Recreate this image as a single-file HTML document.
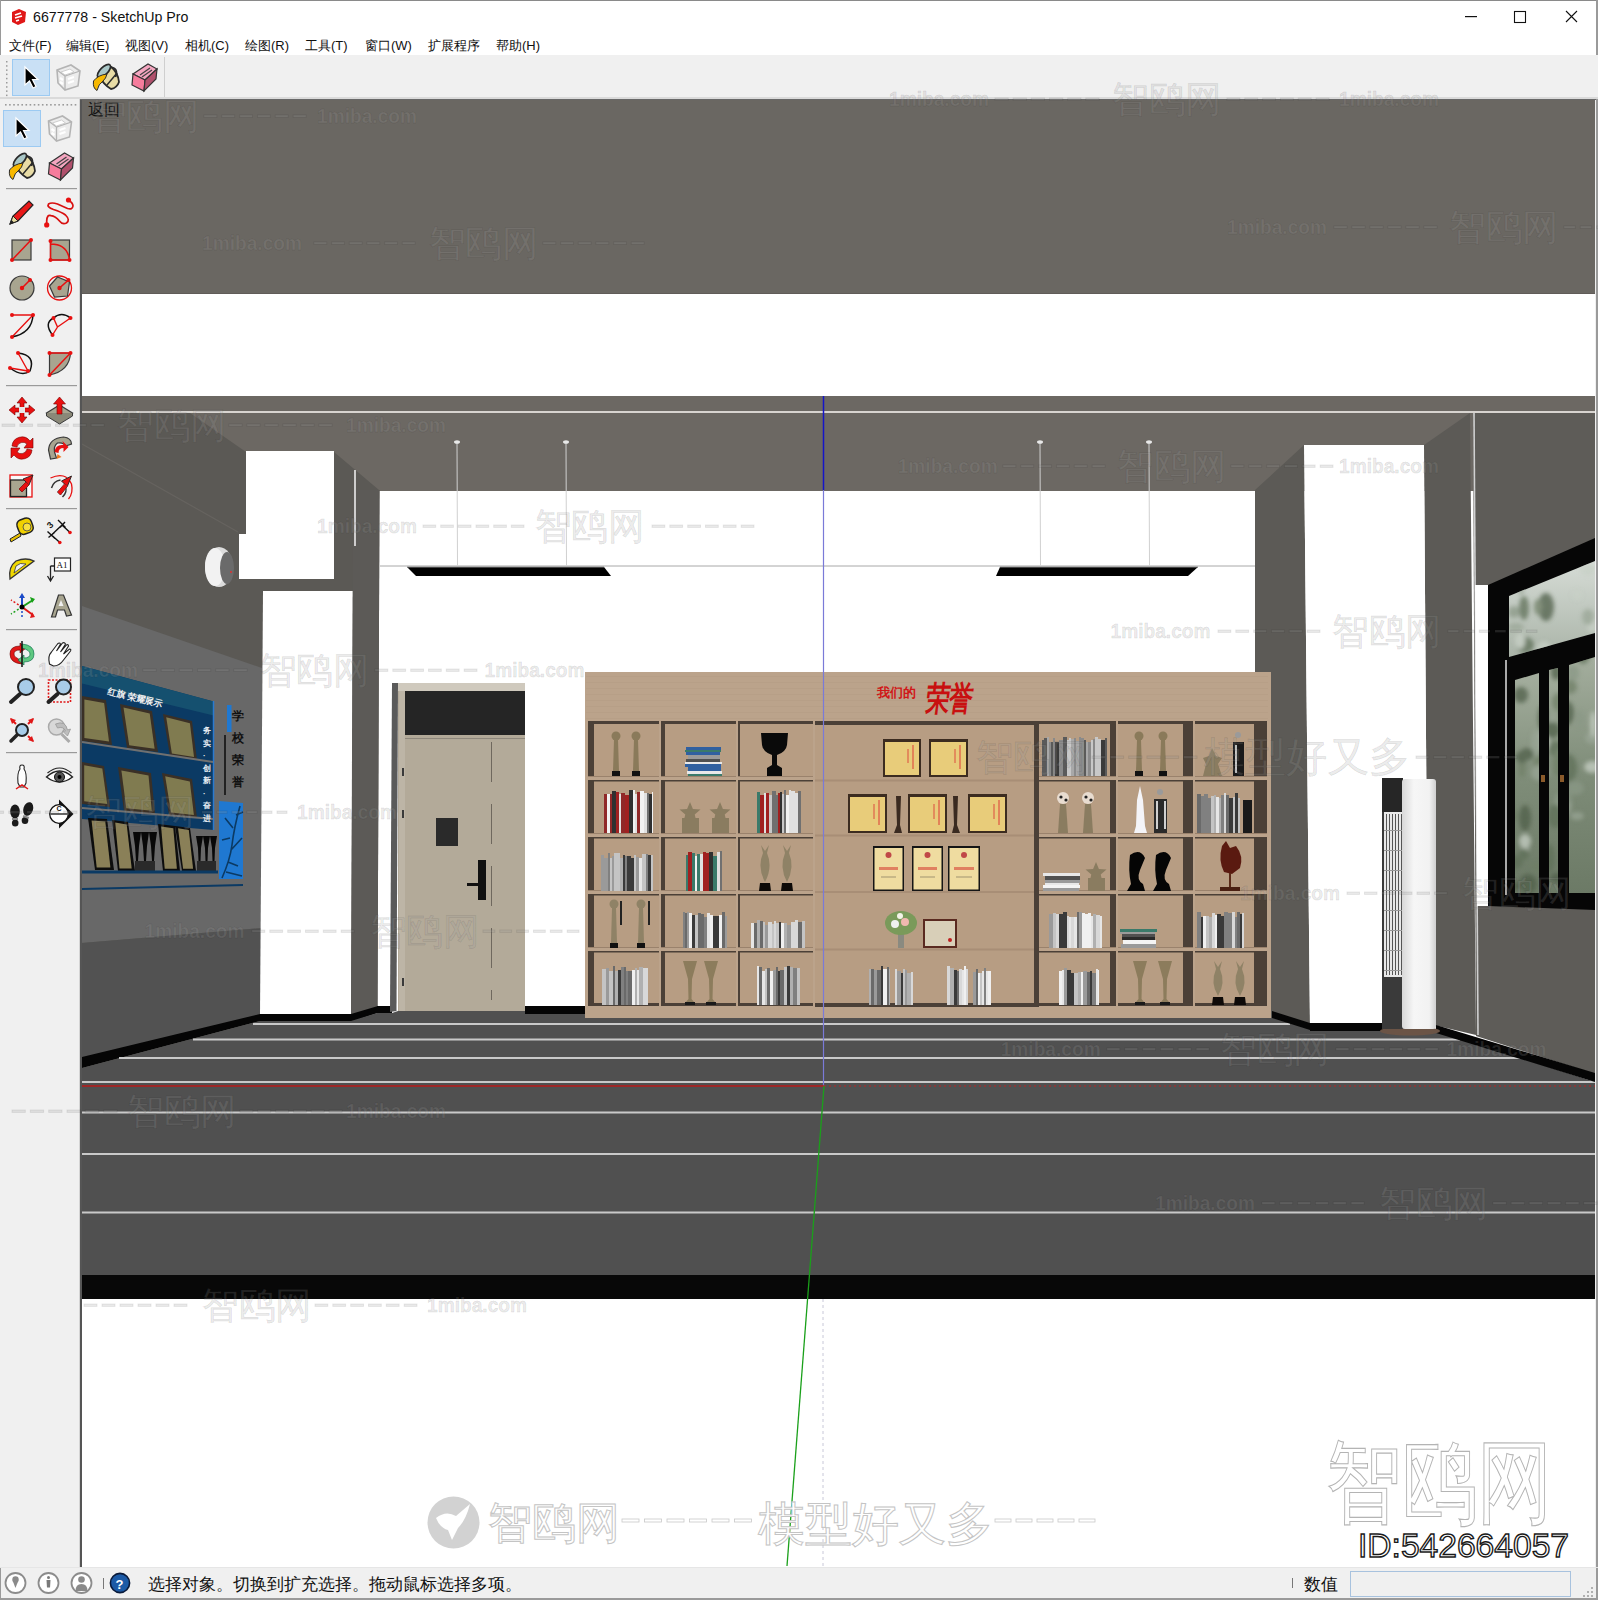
<!DOCTYPE html>
<html><head><meta charset="utf-8">
<style>
html,body{margin:0;padding:0;}
body{width:1598px;height:1600px;overflow:hidden;background:#f0f0f0;font-family:"Liberation Sans",sans-serif;position:relative;}
svg{position:absolute;left:0;top:0;}
</style></head>
<body>
<svg width="1598" height="1600" viewBox="0 0 1598 1600" font-family="Liberation Sans, sans-serif">
<defs>
<linearGradient id="glassUp" x1="0" y1="0" x2="0" y2="1"><stop offset="0" stop-color="#d6dcd6"/><stop offset="1" stop-color="#aab4a8"/></linearGradient>
<linearGradient id="glassLo" x1="0" y1="0" x2="0" y2="1"><stop offset="0" stop-color="#a4ae9e"/><stop offset="0.5" stop-color="#7e8c78"/><stop offset="1" stop-color="#6c7a66"/></linearGradient>
<linearGradient id="acw" x1="0" y1="0" x2="1" y2="0"><stop offset="0" stop-color="#d8d8d8"/><stop offset="0.35" stop-color="#f6f6f6"/><stop offset="0.8" stop-color="#f2f2f2"/><stop offset="1" stop-color="#cfcfcf"/></linearGradient>
<filter id="blur1"><feGaussianBlur stdDeviation="2"/></filter>
<clipPath id="glassclip"><polygon points="1509,596 1595,561 1595,633 1509,657"/><polygon points="1515,680 1539,673 1539,893 1515,893"/><polygon points="1549,670 1558,668 1558,893 1549,893"/><polygon points="1569,665 1595,657 1595,893 1569,893"/></clipPath>
</defs>
<rect x="0" y="0" width="1598" height="1600" fill="#f0f0f0"/>

<!-- VIEWPORT -->
<g id="vp">
<rect x="82" y="99" width="1513" height="1468" fill="#ffffff"/>
<!-- ceiling top -->
<rect x="82" y="99" width="1513" height="195" fill="#6a6762"/>
<rect x="82" y="293" width="1513" height="1" fill="#605c58"/>
<!-- lower ceiling band -->
<rect x="82" y="396" width="1513" height="95" fill="#6c6863"/>
<rect x="82" y="411" width="1513" height="2" fill="#d8d4d0"/>
<!-- left wall base dark -->
<polygon points="82,413 190,413 246,452 334,452 379,490 379.5,490 377.5,1010 82,1070" fill="#5b5955"/>
<!-- left wall lighter band -->
<polygon points="82,606 262,668 262,928 82,943" fill="#686868"/>
<!-- left wall lower -->
<polygon points="82,943 262,928 262,1016 82,1062" fill="#525252"/>
<!-- thin diagonal light line -->
<line x1="82" y1="444" x2="238" y2="532" stroke="#66635f" stroke-width="1.2"/>
<!-- white ceiling box -->
<polygon points="246,451 334,451 334,579 239,579 239,534 246,534" fill="#ffffff"/>
<!-- smoke detector -->
<ellipse cx="219" cy="567" rx="14" ry="20" fill="#dcdcdc"/>
<ellipse cx="215" cy="567" rx="10" ry="19" fill="#f2f2f2"/>
<ellipse cx="227" cy="568" rx="7" ry="16" fill="#6a6a6a"/>
<circle cx="231" cy="572" r="1" fill="#e03030"/>
<!-- left white pillar -->
<polygon points="263,591 353,591 351,1015 260,1015" fill="#ffffff"/>
<!-- back wall white region already white; pillar side dark -->
<polygon points="353,490 379.5,490 377.5,1008 351,1021" fill="#5c5a57"/>
<line x1="355" y1="470" x2="355" y2="546" stroke="#f4f4f4" stroke-width="1.5"/>
<!-- baseboards left -->
<polygon points="82,1057 260,1014 260,1021 82,1068" fill="#050505"/>
<polygon points="260,1014 351,1014 351,1021 260,1021" fill="#050505"/>
<polygon points="351,1014 378,1006 378,1013 351,1022" fill="#050505"/><rect x="377" y="1006" width="15" height="7" fill="#050505"/>
<!-- right side: pillar side dark regions -->
<polygon points="1255,490 1304,445 1310,1030 1272,1019 1255,1019" fill="#5c5a56"/>
<polygon points="1424,445 1470,413 1476,1035 1438,1026 1428,1024" fill="#5c5a56"/>
<!-- right wall -->
<polygon points="1473,413 1595,413 1595,1074 1476,1036" fill="#5e5c58"/>
<!-- right white pillar -->
<polygon points="1304,445 1424,445 1428,1024 1310,1024" fill="#ffffff"/>
<!-- back wall baseline (beam bottom) -->
<line x1="380" y1="566" x2="1255" y2="566" stroke="#a8a8a8" stroke-width="1"/>
<!-- floor -->
<polygon points="82,1068 260,1021 351,1021 377,1013 392,1013 398,1011 525,1011 583,1014 1272,1018 1310,1029 1384,1031 1438,1031 1595,1082 1595,1275 82,1275" fill="#505050"/>

<g id="floor">
<rect x="253" y="1023" width="1037" height="2" fill="#c9c9c9"/>
<rect x="193" y="1038.5" width="1267" height="2" fill="#c9c9c9"/>
<rect x="119" y="1057" width="1411" height="2" fill="#c9c9c9"/>
<rect x="82" y="1081" width="1513" height="2" fill="#c9c9c9"/>
<rect x="82" y="1111.5" width="1513" height="2" fill="#c9c9c9"/>
<rect x="82" y="1153" width="1513" height="2" fill="#c9c9c9"/>
<rect x="82" y="1211.5" width="1513" height="2" fill="#c9c9c9"/>
<rect x="82" y="1275" width="1513" height="24" fill="#080808"/>
</g>
<polygon points="1272,1011 1310,1023 1310,1030 1272,1018" fill="#050505"/>
<rect x="1310" y="1023" width="75" height="8" fill="#050505"/>
<polygon points="1436,1025 1595,1073 1595,1082 1436,1033" fill="#050505"/>
<rect x="380" y="1007" width="12" height="6" fill="#050505"/>
<rect x="525" y="1006" width="60" height="8" fill="#050505"/>
<line x1="457" y1="443" x2="457.5" y2="566" stroke="#d0d0d0" stroke-width="1"/>
<ellipse cx="457" cy="442" rx="3" ry="1.8" fill="#e8e8e8"/>
<line x1="566" y1="443" x2="566.5" y2="566" stroke="#d0d0d0" stroke-width="1"/>
<ellipse cx="566" cy="442" rx="3" ry="1.8" fill="#e8e8e8"/>
<line x1="1040" y1="443" x2="1040.5" y2="566" stroke="#d0d0d0" stroke-width="1"/>
<ellipse cx="1040" cy="442" rx="3" ry="1.8" fill="#e8e8e8"/>
<line x1="1149" y1="443" x2="1149.5" y2="566" stroke="#d0d0d0" stroke-width="1"/>
<ellipse cx="1149" cy="442" rx="3" ry="1.8" fill="#e8e8e8"/>
<polygon points="407,567 604,567 611,576 416,576" fill="#000"/>
<polygon points="1000,567 1198,567 1188,576 996,576" fill="#000"/>
<line x1="407" y1="567" x2="604" y2="567" stroke="#888" stroke-width="1"/>
<line x1="1000" y1="567" x2="1198" y2="567" stroke="#888" stroke-width="1"/>
<g id="door">
<polygon points="392,683 398,683 396.5,1011 390,1012" fill="#5a5a5a"/>
<rect x="398" y="683" width="127" height="8" fill="#cfc9bd"/>
<rect x="398" y="691" width="127" height="320" fill="#b3aa99"/>
<rect x="399" y="691" width="6" height="320" fill="#bdb5a6"/>
<rect x="405" y="691" width="120" height="44" fill="#252525"/>
<rect x="405" y="738" width="120" height="1" fill="#8f887c"/>
<rect x="436" y="818" width="22" height="28" fill="#2a2a2a"/>
<rect x="478" y="860" width="8" height="40" fill="#111"/>
<rect x="467" y="883" width="19" height="3" fill="#111"/>
<line x1="491.5" y1="742" x2="491.5" y2="1000" stroke="#6f685e" stroke-width="1" stroke-dasharray="40,22"/>
<rect x="402" y="768" width="2" height="8" fill="#3a3a3a"/>
<rect x="402" y="810" width="2" height="8" fill="#3a3a3a"/>
<rect x="402" y="978" width="2" height="8" fill="#3a3a3a"/>
</g>
<g id="shelf">
<rect x="585" y="672" width="686" height="346" fill="#bba38b"/>
<rect x="586" y="676" width="682" height="1" fill="#a88f78" opacity="0.2"/>
<rect x="586" y="682" width="682" height="1" fill="#a88f78" opacity="0.2"/>
<rect x="586" y="688" width="682" height="1" fill="#a88f78" opacity="0.2"/>
<rect x="586" y="694" width="682" height="1" fill="#a88f78" opacity="0.2"/>
<rect x="586" y="700" width="682" height="1" fill="#a88f78" opacity="0.2"/>
<rect x="586" y="706" width="682" height="1" fill="#a88f78" opacity="0.2"/>
<rect x="586" y="712" width="682" height="1" fill="#a88f78" opacity="0.2"/>
<rect x="586" y="718" width="682" height="1" fill="#a88f78" opacity="0.2"/>
<rect x="588" y="721" width="71" height="56" fill="#b79d83"/>
<rect x="588" y="721" width="6" height="56" fill="#4b4037"/>
<rect x="588" y="721" width="71" height="3" fill="#4b4037"/>
<rect x="588" y="776" width="71" height="1" fill="#9a826c"/>
<rect x="661" y="721" width="75" height="56" fill="#b79d83"/>
<rect x="661" y="721" width="4" height="56" fill="#4b4037"/>
<rect x="661" y="721" width="75" height="3" fill="#4b4037"/>
<rect x="661" y="776" width="75" height="1" fill="#9a826c"/>
<rect x="738" y="721" width="75" height="56" fill="#b79d83"/>
<rect x="738" y="721" width="2" height="56" fill="#4b4037"/>
<rect x="738" y="721" width="75" height="3" fill="#4b4037"/>
<rect x="738" y="776" width="75" height="1" fill="#9a826c"/>
<rect x="1039" y="721" width="77" height="56" fill="#b79d83"/>
<rect x="1110" y="721" width="6" height="56" fill="#4b4037"/>
<rect x="1039" y="721" width="77" height="3" fill="#4b4037"/>
<rect x="1039" y="776" width="77" height="1" fill="#9a826c"/>
<rect x="1118" y="721" width="75" height="56" fill="#b79d83"/>
<rect x="1183" y="721" width="10" height="56" fill="#4b4037"/>
<rect x="1118" y="721" width="75" height="3" fill="#4b4037"/>
<rect x="1118" y="776" width="75" height="1" fill="#9a826c"/>
<rect x="1195" y="721" width="72" height="56" fill="#b79d83"/>
<rect x="1254" y="721" width="13" height="56" fill="#4b4037"/>
<rect x="1195" y="721" width="72" height="3" fill="#4b4037"/>
<rect x="1195" y="776" width="72" height="1" fill="#9a826c"/>
<rect x="588" y="780" width="71" height="54" fill="#b79d83"/>
<rect x="588" y="780" width="6" height="54" fill="#4b4037"/>
<rect x="588" y="780" width="71" height="1.5" fill="#4b4037"/>
<rect x="588" y="833" width="71" height="1" fill="#9a826c"/>
<rect x="661" y="780" width="75" height="54" fill="#b79d83"/>
<rect x="661" y="780" width="4" height="54" fill="#4b4037"/>
<rect x="661" y="780" width="75" height="1.5" fill="#4b4037"/>
<rect x="661" y="833" width="75" height="1" fill="#9a826c"/>
<rect x="738" y="780" width="75" height="54" fill="#b79d83"/>
<rect x="738" y="780" width="2" height="54" fill="#4b4037"/>
<rect x="738" y="780" width="75" height="1.5" fill="#4b4037"/>
<rect x="738" y="833" width="75" height="1" fill="#9a826c"/>
<rect x="1039" y="780" width="77" height="54" fill="#b79d83"/>
<rect x="1110" y="780" width="6" height="54" fill="#4b4037"/>
<rect x="1039" y="780" width="77" height="1.5" fill="#4b4037"/>
<rect x="1039" y="833" width="77" height="1" fill="#9a826c"/>
<rect x="1118" y="780" width="75" height="54" fill="#b79d83"/>
<rect x="1183" y="780" width="10" height="54" fill="#4b4037"/>
<rect x="1118" y="780" width="75" height="1.5" fill="#4b4037"/>
<rect x="1118" y="833" width="75" height="1" fill="#9a826c"/>
<rect x="1195" y="780" width="72" height="54" fill="#b79d83"/>
<rect x="1254" y="780" width="13" height="54" fill="#4b4037"/>
<rect x="1195" y="780" width="72" height="1.5" fill="#4b4037"/>
<rect x="1195" y="833" width="72" height="1" fill="#9a826c"/>
<rect x="588" y="837" width="71" height="54" fill="#b79d83"/>
<rect x="588" y="837" width="6" height="54" fill="#4b4037"/>
<rect x="588" y="837" width="71" height="1.5" fill="#4b4037"/>
<rect x="588" y="890" width="71" height="1" fill="#9a826c"/>
<rect x="661" y="837" width="75" height="54" fill="#b79d83"/>
<rect x="661" y="837" width="4" height="54" fill="#4b4037"/>
<rect x="661" y="837" width="75" height="1.5" fill="#4b4037"/>
<rect x="661" y="890" width="75" height="1" fill="#9a826c"/>
<rect x="738" y="837" width="75" height="54" fill="#b79d83"/>
<rect x="738" y="837" width="2" height="54" fill="#4b4037"/>
<rect x="738" y="837" width="75" height="1.5" fill="#4b4037"/>
<rect x="738" y="890" width="75" height="1" fill="#9a826c"/>
<rect x="1039" y="837" width="77" height="54" fill="#b79d83"/>
<rect x="1110" y="837" width="6" height="54" fill="#4b4037"/>
<rect x="1039" y="837" width="77" height="1.5" fill="#4b4037"/>
<rect x="1039" y="890" width="77" height="1" fill="#9a826c"/>
<rect x="1118" y="837" width="75" height="54" fill="#b79d83"/>
<rect x="1183" y="837" width="10" height="54" fill="#4b4037"/>
<rect x="1118" y="837" width="75" height="1.5" fill="#4b4037"/>
<rect x="1118" y="890" width="75" height="1" fill="#9a826c"/>
<rect x="1195" y="837" width="72" height="54" fill="#b79d83"/>
<rect x="1254" y="837" width="13" height="54" fill="#4b4037"/>
<rect x="1195" y="837" width="72" height="1.5" fill="#4b4037"/>
<rect x="1195" y="890" width="72" height="1" fill="#9a826c"/>
<rect x="588" y="894" width="71" height="54" fill="#b79d83"/>
<rect x="588" y="894" width="6" height="54" fill="#4b4037"/>
<rect x="588" y="894" width="71" height="1.5" fill="#4b4037"/>
<rect x="588" y="947" width="71" height="1" fill="#9a826c"/>
<rect x="661" y="894" width="75" height="54" fill="#b79d83"/>
<rect x="661" y="894" width="4" height="54" fill="#4b4037"/>
<rect x="661" y="894" width="75" height="1.5" fill="#4b4037"/>
<rect x="661" y="947" width="75" height="1" fill="#9a826c"/>
<rect x="738" y="894" width="75" height="54" fill="#b79d83"/>
<rect x="738" y="894" width="2" height="54" fill="#4b4037"/>
<rect x="738" y="894" width="75" height="1.5" fill="#4b4037"/>
<rect x="738" y="947" width="75" height="1" fill="#9a826c"/>
<rect x="1039" y="894" width="77" height="54" fill="#b79d83"/>
<rect x="1110" y="894" width="6" height="54" fill="#4b4037"/>
<rect x="1039" y="894" width="77" height="1.5" fill="#4b4037"/>
<rect x="1039" y="947" width="77" height="1" fill="#9a826c"/>
<rect x="1118" y="894" width="75" height="54" fill="#b79d83"/>
<rect x="1183" y="894" width="10" height="54" fill="#4b4037"/>
<rect x="1118" y="894" width="75" height="1.5" fill="#4b4037"/>
<rect x="1118" y="947" width="75" height="1" fill="#9a826c"/>
<rect x="1195" y="894" width="72" height="54" fill="#b79d83"/>
<rect x="1254" y="894" width="13" height="54" fill="#4b4037"/>
<rect x="1195" y="894" width="72" height="1.5" fill="#4b4037"/>
<rect x="1195" y="947" width="72" height="1" fill="#9a826c"/>
<rect x="588" y="951" width="71" height="55" fill="#b79d83"/>
<rect x="588" y="951" width="6" height="55" fill="#4b4037"/>
<rect x="588" y="951" width="71" height="1.5" fill="#4b4037"/>
<rect x="588" y="1005" width="71" height="1" fill="#9a826c"/>
<rect x="661" y="951" width="75" height="55" fill="#b79d83"/>
<rect x="661" y="951" width="4" height="55" fill="#4b4037"/>
<rect x="661" y="951" width="75" height="1.5" fill="#4b4037"/>
<rect x="661" y="1005" width="75" height="1" fill="#9a826c"/>
<rect x="738" y="951" width="75" height="55" fill="#b79d83"/>
<rect x="738" y="951" width="2" height="55" fill="#4b4037"/>
<rect x="738" y="951" width="75" height="1.5" fill="#4b4037"/>
<rect x="738" y="1005" width="75" height="1" fill="#9a826c"/>
<rect x="1039" y="951" width="77" height="55" fill="#b79d83"/>
<rect x="1110" y="951" width="6" height="55" fill="#4b4037"/>
<rect x="1039" y="951" width="77" height="1.5" fill="#4b4037"/>
<rect x="1039" y="1005" width="77" height="1" fill="#9a826c"/>
<rect x="1118" y="951" width="75" height="55" fill="#b79d83"/>
<rect x="1183" y="951" width="10" height="55" fill="#4b4037"/>
<rect x="1118" y="951" width="75" height="1.5" fill="#4b4037"/>
<rect x="1118" y="1005" width="75" height="1" fill="#9a826c"/>
<rect x="1195" y="951" width="72" height="55" fill="#b79d83"/>
<rect x="1254" y="951" width="13" height="55" fill="#4b4037"/>
<rect x="1195" y="951" width="72" height="1.5" fill="#4b4037"/>
<rect x="1195" y="1005" width="72" height="1" fill="#9a826c"/>
<rect x="815" y="721" width="224" height="285" fill="#b79d83"/>
<rect x="815" y="721" width="224" height="4" fill="#4b4037"/>
<rect x="1034" y="721" width="5" height="286" fill="#4b4037"/>
<rect x="815" y="779.5" width="219" height="2" fill="#a88e76"/>
<rect x="815" y="834.5" width="219" height="2" fill="#a88e76"/>
<rect x="815" y="891" width="219" height="2" fill="#a88e76"/>
<rect x="815" y="948.5" width="219" height="2" fill="#a88e76"/>
<rect x="815" y="1003" width="224" height="4" fill="#4b4037"/>
<rect x="588" y="1003" width="71" height="3" fill="#4b4037"/>
<rect x="661" y="1003" width="75" height="3" fill="#4b4037"/>
<rect x="738" y="1003" width="75" height="3" fill="#4b4037"/>
<rect x="1039" y="1003" width="77" height="3" fill="#4b4037"/>
<rect x="1118" y="1003" width="75" height="3" fill="#4b4037"/>
<rect x="1195" y="1003" width="72" height="3" fill="#4b4037"/>
<text x="877" y="697" font-size="13" font-weight="bold" fill="#d01818">我们的</text>
<text x="0" y="0" font-size="27" font-weight="bold" fill="#c81010" font-family="Liberation Serif, serif" transform="translate(925 710) scale(0.88 1.25) skewX(-10)">荣誉</text>
<circle cx="616" cy="736" r="4.5" fill="#8a7a5a"/><path d="M614,740 L618,740 L619,771 L613,771 Z" fill="#8a7a5a"/><rect x="612" y="771" width="8" height="5" fill="#111"/>
<circle cx="636" cy="736" r="4.5" fill="#8a7a5a"/><path d="M634,740 L638,740 L639,771 L633,771 Z" fill="#8a7a5a"/><rect x="632" y="771" width="8" height="5" fill="#111"/>
<rect x="686" y="747" width="35" height="3" fill="#3060a0"/><rect x="685" y="750" width="36" height="2" fill="#3a7a6a"/><rect x="686" y="752" width="34" height="3" fill="#3060a0"/><rect x="688" y="755" width="32" height="4" fill="#9a9a9a"/><rect x="686" y="759" width="34" height="3" fill="#505050"/><rect x="685" y="762" width="37" height="2" fill="#e8e8e8"/><rect x="685" y="764" width="36" height="3" fill="#3060a0"/><rect x="688" y="767" width="33" height="4" fill="#3060a0"/><rect x="687" y="771" width="35" height="3" fill="#e8e8e8"/><rect x="688" y="774" width="34" height="2" fill="#3a7a6a"/>
<path d="M761,733 L788,733 L787,745 Q786,752 777,755 L777,765 L782,768 L782,776 L767,776 L767,768 L772,765 L772,755 Q763,752 762,745 Z" fill="#0a0a0a"/>
<rect x="604" y="794" width="3" height="39" fill="#902828"/><rect x="607" y="794" width="3" height="39" fill="#f2f2f2"/><rect x="610" y="794" width="2" height="39" fill="#902828"/><rect x="612" y="791" width="4" height="42" fill="#303030"/><rect x="616" y="792" width="3" height="41" fill="#a02020"/><rect x="619" y="794" width="2" height="39" fill="#e0e0e0"/><rect x="621" y="793" width="4" height="40" fill="#902828"/><rect x="625" y="795" width="4" height="38" fill="#a02020"/><rect x="629" y="790" width="4" height="43" fill="#303030"/><rect x="633" y="790" width="2" height="43" fill="#f2f2f2"/><rect x="635" y="794" width="2" height="39" fill="#e0e0e0"/><rect x="637" y="792" width="3" height="41" fill="#902828"/><rect x="640" y="791" width="4" height="42" fill="#f2f2f2"/><rect x="644" y="793" width="3" height="40" fill="#e0e0e0"/><rect x="647" y="793" width="2" height="40" fill="#707070"/><rect x="649" y="794" width="3" height="39" fill="#303030"/><rect x="652" y="792" width="1" height="41" fill="#f2f2f2"/>
<polygon points="690.0,802.0 692.9,809.0 700.5,809.6 694.7,814.5 696.5,821.9 690.0,818.0 683.5,821.9 685.3,814.5 679.5,809.6 687.1,809.0" fill="#8a7c60"/>
<rect x="682" y="818" width="17" height="15" fill="#8a7c60"/>
<polygon points="720.0,802.0 722.9,809.0 730.5,809.6 724.7,814.5 726.5,821.9 720.0,818.0 713.5,821.9 715.3,814.5 709.5,809.6 717.1,809.0" fill="#8a7c60"/>
<rect x="712" y="818" width="17" height="15" fill="#8a7c60"/>
<rect x="757" y="792" width="3" height="41" fill="#3a7a6a"/><rect x="760" y="795" width="4" height="38" fill="#a02020"/><rect x="764" y="793" width="2" height="40" fill="#e0e0e0"/><rect x="766" y="793" width="3" height="40" fill="#a02020"/><rect x="769" y="795" width="3" height="38" fill="#c8c8c8"/><rect x="772" y="791" width="4" height="42" fill="#707070"/><rect x="776" y="795" width="2" height="38" fill="#707070"/><rect x="778" y="793" width="2" height="40" fill="#a02020"/><rect x="780" y="792" width="2" height="41" fill="#303030"/><rect x="782" y="794" width="2" height="39" fill="#c8c8c8"/><rect x="784" y="790" width="2" height="43" fill="#707070"/><rect x="786" y="795" width="3" height="38" fill="#f2f2f2"/><rect x="789" y="790" width="2" height="43" fill="#e0e0e0"/><rect x="791" y="791" width="4" height="42" fill="#e0e0e0"/><rect x="795" y="793" width="3" height="40" fill="#e0e0e0"/><rect x="798" y="791" width="3" height="42" fill="#707070"/>
<rect x="601" y="855" width="3" height="36" fill="#9a9a9a"/><rect x="604" y="858" width="2" height="33" fill="#9a9a9a"/><rect x="606" y="858" width="2" height="33" fill="#9a9a9a"/><rect x="608" y="853" width="2" height="38" fill="#808080"/><rect x="610" y="858" width="2" height="33" fill="#c4c4c4"/><rect x="612" y="856" width="2" height="35" fill="#9a9a9a"/><rect x="614" y="853" width="4" height="38" fill="#c4c4c4"/><rect x="618" y="853" width="2" height="38" fill="#c4c4c4"/><rect x="620" y="858" width="3" height="33" fill="#b0b0b0"/><rect x="623" y="855" width="2" height="36" fill="#3a3a3a"/><rect x="625" y="856" width="2" height="35" fill="#808080"/><rect x="627" y="856" width="4" height="35" fill="#3a3a3a"/><rect x="631" y="858" width="3" height="33" fill="#3a3a3a"/><rect x="634" y="855" width="2" height="36" fill="#c4c4c4"/><rect x="636" y="857" width="3" height="34" fill="#9a9a9a"/><rect x="639" y="858" width="3" height="33" fill="#e6e6e6"/><rect x="642" y="854" width="4" height="37" fill="#c4c4c4"/><rect x="646" y="854" width="2" height="37" fill="#808080"/><rect x="648" y="855" width="3" height="36" fill="#3a3a3a"/><rect x="651" y="855" width="2" height="36" fill="#c4c4c4"/>
<rect x="686" y="855" width="2" height="36" fill="#3a7a6a"/><rect x="688" y="852" width="4" height="39" fill="#a02020"/><rect x="692" y="853" width="3" height="38" fill="#3a7a6a"/><rect x="695" y="856" width="2" height="35" fill="#f2f2f2"/><rect x="697" y="854" width="3" height="37" fill="#3a7a6a"/><rect x="700" y="854" width="3" height="37" fill="#e0e0e0"/><rect x="703" y="852" width="3" height="39" fill="#a02020"/><rect x="706" y="853" width="3" height="38" fill="#a02020"/><rect x="709" y="852" width="4" height="39" fill="#303030"/><rect x="713" y="856" width="4" height="35" fill="#3a7a6a"/><rect x="717" y="852" width="3" height="39" fill="#e0e0e0"/><rect x="720" y="851" width="2" height="40" fill="#707070"/>
<path d="M761,845 L765,851 L769,845 L767,853 Q773,867 765,882 Q757,867 763,853 Z" fill="#8f8266"/><path d="M759,891 L760,883 L770,883 L771,891 Z" fill="#0e0a08"/>
<path d="M783,845 L787,851 L791,845 L789,853 Q795,867 787,882 Q779,867 785,853 Z" fill="#8f8266"/><path d="M781,891 L782,883 L792,883 L793,891 Z" fill="#0e0a08"/>
<circle cx="614" cy="904" r="4.5" fill="#8f8266"/><path d="M612,908 L616,908 L617,943 L611,943 Z" fill="#8f8266"/><rect x="610" y="943" width="8" height="5" fill="#111"/>
<rect x="620" y="901" width="2" height="24" fill="#222"/>
<circle cx="641" cy="904" r="4.5" fill="#8f8266"/><path d="M639,908 L643,908 L644,943 L638,943 Z" fill="#8f8266"/><rect x="637" y="943" width="8" height="5" fill="#111"/>
<rect x="648" y="901" width="2" height="24" fill="#222"/>
<rect x="683" y="912" width="2" height="36" fill="#808080"/><rect x="685" y="913" width="2" height="35" fill="#6a6a6a"/><rect x="687" y="912" width="2" height="36" fill="#9a9a9a"/><rect x="689" y="913" width="3" height="35" fill="#f0f0f0"/><rect x="692" y="915" width="3" height="33" fill="#3a3a3a"/><rect x="695" y="915" width="3" height="33" fill="#c4c4c4"/><rect x="698" y="913" width="3" height="35" fill="#6a6a6a"/><rect x="701" y="914" width="3" height="34" fill="#6a6a6a"/><rect x="704" y="917" width="3" height="31" fill="#808080"/><rect x="707" y="913" width="3" height="35" fill="#e6e6e6"/><rect x="710" y="915" width="3" height="33" fill="#f0f0f0"/><rect x="713" y="916" width="3" height="32" fill="#3a3a3a"/><rect x="716" y="916" width="3" height="32" fill="#3a3a3a"/><rect x="719" y="915" width="3" height="33" fill="#f0f0f0"/><rect x="722" y="912" width="3" height="36" fill="#6a6a6a"/><rect x="725" y="916" width="2" height="32" fill="#9a9a9a"/>
<rect x="751" y="923" width="3" height="25" fill="#e6e6e6"/><rect x="754" y="923" width="3" height="25" fill="#6a6a6a"/><rect x="757" y="920" width="3" height="28" fill="#b0b0b0"/><rect x="760" y="921" width="3" height="27" fill="#6a6a6a"/><rect x="763" y="922" width="2" height="26" fill="#c4c4c4"/><rect x="765" y="925" width="3" height="23" fill="#9a9a9a"/><rect x="768" y="922" width="4" height="26" fill="#d8d8d8"/><rect x="772" y="924" width="2" height="24" fill="#c4c4c4"/><rect x="774" y="921" width="2" height="27" fill="#d8d8d8"/><rect x="776" y="923" width="3" height="25" fill="#c4c4c4"/><rect x="779" y="922" width="2" height="26" fill="#3a3a3a"/><rect x="781" y="923" width="3" height="25" fill="#f0f0f0"/><rect x="784" y="923" width="3" height="25" fill="#b0b0b0"/><rect x="787" y="925" width="4" height="23" fill="#9a9a9a"/><rect x="791" y="922" width="4" height="26" fill="#d8d8d8"/><rect x="795" y="920" width="3" height="28" fill="#d8d8d8"/><rect x="798" y="922" width="4" height="26" fill="#6a6a6a"/><rect x="802" y="921" width="3" height="27" fill="#c4c4c4"/>
<rect x="602" y="969" width="4" height="36" fill="#c4c4c4"/><rect x="606" y="968" width="3" height="37" fill="#9a9a9a"/><rect x="609" y="971" width="4" height="34" fill="#c4c4c4"/><rect x="613" y="966" width="2" height="39" fill="#6a6a6a"/><rect x="615" y="971" width="3" height="34" fill="#b0b0b0"/><rect x="618" y="970" width="3" height="35" fill="#3a3a3a"/><rect x="621" y="967" width="3" height="38" fill="#808080"/><rect x="624" y="967" width="2" height="38" fill="#6a6a6a"/><rect x="626" y="971" width="2" height="34" fill="#808080"/><rect x="628" y="971" width="4" height="34" fill="#6a6a6a"/><rect x="632" y="970" width="3" height="35" fill="#f0f0f0"/><rect x="635" y="968" width="2" height="37" fill="#b0b0b0"/><rect x="637" y="970" width="2" height="35" fill="#e6e6e6"/><rect x="639" y="967" width="4" height="38" fill="#b0b0b0"/><rect x="643" y="968" width="4" height="37" fill="#d8d8d8"/><rect x="647" y="968" width="1" height="37" fill="#d8d8d8"/>
<path d="M683,961 L697,961 L692,979 L691.5,999 L694,1002 L686,1002 L688.5,999 L688,979 Z" fill="#8c7c5c"/><rect x="685" y="1002" width="10" height="3" fill="#1a1a1a"/>
<path d="M704,961 L718,961 L713,979 L712.5,999 L715,1002 L707,1002 L709.5,999 L709,979 Z" fill="#8c7c5c"/><rect x="706" y="1002" width="10" height="3" fill="#1a1a1a"/>
<rect x="757" y="966" width="2" height="39" fill="#e6e6e6"/><rect x="759" y="967" width="3" height="38" fill="#6a6a6a"/><rect x="762" y="971" width="3" height="34" fill="#e6e6e6"/><rect x="765" y="969" width="2" height="36" fill="#c4c4c4"/><rect x="767" y="968" width="3" height="37" fill="#6a6a6a"/><rect x="770" y="971" width="3" height="34" fill="#f0f0f0"/><rect x="773" y="970" width="3" height="35" fill="#9a9a9a"/><rect x="776" y="967" width="2" height="38" fill="#6a6a6a"/><rect x="778" y="971" width="2" height="34" fill="#3a3a3a"/><rect x="780" y="970" width="4" height="35" fill="#6a6a6a"/><rect x="784" y="967" width="3" height="38" fill="#c4c4c4"/><rect x="787" y="966" width="3" height="39" fill="#3a3a3a"/><rect x="790" y="967" width="3" height="38" fill="#b0b0b0"/><rect x="793" y="968" width="4" height="37" fill="#808080"/><rect x="797" y="968" width="3" height="37" fill="#c4c4c4"/>
<rect x="883" y="739" width="38" height="38" fill="#3c2c20"/><rect x="885" y="742" width="34" height="33" fill="#e8cc7a"/><rect x="912" y="745" width="2" height="24" fill="#e07050" opacity="0.8"/><rect x="907" y="749" width="2" height="14" fill="#e07050" opacity="0.7"/>
<rect x="929" y="739" width="39" height="38" fill="#3c2c20"/><rect x="931" y="742" width="35" height="33" fill="#e8cc7a"/><rect x="959" y="745" width="2" height="24" fill="#e07050" opacity="0.8"/><rect x="954" y="749" width="2" height="14" fill="#e07050" opacity="0.7"/>
<rect x="848" y="794" width="39" height="39" fill="#3c2c20"/><rect x="850" y="797" width="35" height="34" fill="#e8cc7a"/><rect x="878" y="800" width="2" height="25" fill="#e07050" opacity="0.8"/><rect x="873" y="804" width="2" height="15" fill="#e07050" opacity="0.7"/>
<rect x="908" y="794" width="39" height="39" fill="#3c2c20"/><rect x="910" y="797" width="35" height="34" fill="#e8cc7a"/><rect x="938" y="800" width="2" height="25" fill="#e07050" opacity="0.8"/><rect x="933" y="804" width="2" height="15" fill="#e07050" opacity="0.7"/>
<rect x="968" y="794" width="39" height="39" fill="#3c2c20"/><rect x="970" y="797" width="35" height="34" fill="#e8cc7a"/><rect x="998" y="800" width="2" height="25" fill="#e07050" opacity="0.8"/><rect x="993" y="804" width="2" height="15" fill="#e07050" opacity="0.7"/>
<path d="M896,796 L901,796 L900,825 L902,833 L894,833 L897,825 Z" fill="#3a2a20"/>
<path d="M953,796 L958,796 L957,825 L960,833 L952,833 L954,825 Z" fill="#3a2a20"/>
<rect x="873" y="846" width="31" height="45" fill="#151515"/><rect x="874.5" y="848" width="28" height="41.5" fill="#efdca0"/><circle cx="888.5" cy="855" r="3" fill="#c04848"/><rect x="879" y="867" width="19" height="3" fill="#e08060"/><rect x="881" y="876" width="15" height="2" fill="#c8b888"/>
<rect x="912" y="846" width="31" height="45" fill="#151515"/><rect x="913.5" y="848" width="28" height="41.5" fill="#efdca0"/><circle cx="927.5" cy="855" r="3" fill="#c04848"/><rect x="918" y="867" width="19" height="3" fill="#e08060"/><rect x="920" y="876" width="15" height="2" fill="#c8b888"/>
<rect x="948" y="846" width="32" height="45" fill="#151515"/><rect x="949.5" y="848" width="29" height="41.5" fill="#efdca0"/><circle cx="964.0" cy="855" r="3" fill="#c04848"/><rect x="954" y="867" width="20" height="3" fill="#e08060"/><rect x="956" y="876" width="16" height="2" fill="#c8b888"/>
<rect x="898" y="930" width="6" height="18" fill="#8a8a80"/>
<ellipse cx="901" cy="923" rx="16" ry="12" fill="#7a9a5a"/>
<circle cx="895" cy="924" r="4" fill="#f0f0f0"/><circle cx="905" cy="922" r="4" fill="#f0b8b0"/><circle cx="900" cy="916" r="3" fill="#f4f4e8"/>
<rect x="923" y="919" width="34" height="29" fill="#5a2a20"/><rect x="925" y="921" width="30" height="25" fill="#d8cfb8"/><circle cx="950" cy="940" r="2" fill="#c02020"/>
<rect x="869" y="969" width="2" height="36" fill="#b0b0b0"/><rect x="871" y="969" width="3" height="36" fill="#6a6a6a"/><rect x="874" y="970" width="3" height="35" fill="#9a9a9a"/><rect x="877" y="970" width="4" height="35" fill="#6a6a6a"/><rect x="881" y="966" width="2" height="39" fill="#3a3a3a"/><rect x="883" y="969" width="4" height="36" fill="#f0f0f0"/><rect x="887" y="967" width="2" height="38" fill="#6a6a6a"/><rect x="889" y="969" width="1" height="36" fill="#b0b0b0"/>
<rect x="895" y="969" width="2" height="36" fill="#d8d8d8"/><rect x="897" y="971" width="4" height="34" fill="#9a9a9a"/><rect x="901" y="973" width="2" height="32" fill="#3a3a3a"/><rect x="903" y="969" width="2" height="36" fill="#c4c4c4"/><rect x="905" y="970" width="2" height="35" fill="#9a9a9a"/><rect x="907" y="973" width="4" height="32" fill="#b0b0b0"/><rect x="911" y="972" width="2" height="33" fill="#d8d8d8"/>
<rect x="947" y="966" width="3" height="39" fill="#d8d8d8"/><rect x="950" y="968" width="4" height="37" fill="#b0b0b0"/><rect x="954" y="970" width="3" height="35" fill="#3a3a3a"/><rect x="957" y="971" width="2" height="34" fill="#6a6a6a"/><rect x="959" y="969" width="3" height="36" fill="#d8d8d8"/><rect x="962" y="970" width="2" height="35" fill="#e6e6e6"/><rect x="964" y="966" width="2" height="39" fill="#f0f0f0"/><rect x="966" y="969" width="2" height="36" fill="#d8d8d8"/>
<rect x="973" y="972" width="3" height="33" fill="#9a9a9a"/><rect x="976" y="969" width="2" height="36" fill="#6a6a6a"/><rect x="978" y="973" width="2" height="32" fill="#f0f0f0"/><rect x="980" y="973" width="2" height="32" fill="#c4c4c4"/><rect x="982" y="971" width="2" height="34" fill="#e6e6e6"/><rect x="984" y="968" width="2" height="37" fill="#808080"/><rect x="986" y="971" width="2" height="34" fill="#e6e6e6"/><rect x="988" y="971" width="3" height="34" fill="#f0f0f0"/>
<rect x="1042" y="740" width="2" height="36" fill="#5a5a5a"/><rect x="1044" y="738" width="3" height="38" fill="#5a5a5a"/><rect x="1047" y="737" width="2" height="39" fill="#a8a8a8"/><rect x="1049" y="742" width="2" height="34" fill="#8a8a8a"/><rect x="1051" y="742" width="2" height="34" fill="#5a5a5a"/><rect x="1053" y="738" width="2" height="38" fill="#8a8a8a"/><rect x="1055" y="742" width="4" height="34" fill="#3a3a3a"/><rect x="1059" y="740" width="4" height="36" fill="#8a8a8a"/><rect x="1063" y="737" width="4" height="39" fill="#5a5a5a"/><rect x="1067" y="740" width="2" height="36" fill="#c8c8c8"/><rect x="1069" y="738" width="2" height="38" fill="#c8c8c8"/><rect x="1071" y="739" width="3" height="37" fill="#a8a8a8"/><rect x="1074" y="738" width="2" height="38" fill="#8a8a8a"/><rect x="1076" y="741" width="3" height="35" fill="#a8a8a8"/><rect x="1079" y="737" width="2" height="39" fill="#8a8a8a"/><rect x="1081" y="738" width="3" height="38" fill="#8a8a8a"/><rect x="1084" y="740" width="2" height="36" fill="#5a5a5a"/><rect x="1086" y="742" width="2" height="34" fill="#a8a8a8"/><rect x="1088" y="742" width="3" height="34" fill="#8a8a8a"/><rect x="1091" y="740" width="2" height="36" fill="#c8c8c8"/><rect x="1093" y="739" width="2" height="37" fill="#8a8a8a"/><rect x="1095" y="737" width="3" height="39" fill="#c8c8c8"/><rect x="1098" y="739" width="3" height="37" fill="#c8c8c8"/><rect x="1101" y="740" width="4" height="36" fill="#3a3a3a"/><rect x="1105" y="738" width="2" height="38" fill="#5a5a5a"/>
<circle cx="1139" cy="736" r="4.5" fill="#8a7a5a"/><path d="M1137,740 L1141,740 L1142,771 L1136,771 Z" fill="#8a7a5a"/><rect x="1135" y="771" width="8" height="5" fill="#111"/>
<circle cx="1163" cy="736" r="4.5" fill="#8a7a5a"/><path d="M1161,740 L1165,740 L1166,771 L1160,771 Z" fill="#8a7a5a"/><rect x="1159" y="771" width="8" height="5" fill="#111"/>
<polygon points="1212,748 1216,756 1222,758 1218,764 1222,776 1203,776 1206,764 1203,758 1209,756" fill="#8a7c60"/>
<rect x="1233" y="742" width="11" height="34" fill="#1a1a1a"/><rect x="1235" y="745" width="2" height="28" fill="#c8c8c8"/><circle cx="1238" cy="735" r="3" fill="#9a9a9a"/>
<circle cx="1063" cy="798" r="6" fill="#e8dcd0"/><circle cx="1061" cy="797" r="1.6" fill="#222"/><circle cx="1066" cy="800" r="1.6" fill="#222"/>
<path d="M1060,804 L1066,804 L1068,833 L1058,833 Z" fill="#8a7c60"/>
<circle cx="1088" cy="798" r="6" fill="#e8dcd0"/><circle cx="1086" cy="797" r="1.6" fill="#222"/><circle cx="1091" cy="800" r="1.6" fill="#222"/>
<path d="M1085,804 L1091,804 L1093,833 L1083,833 Z" fill="#8a7c60"/>
<path d="M1140,786 L1143,800 L1145,826 L1147,833 L1134,833 L1136,826 L1137,800 Z" fill="#f4f4f8"/>
<rect x="1154" y="799" width="13" height="34" fill="#2a2a2a"/><rect x="1156" y="801" width="2" height="28" fill="#d0d0d0"/><rect x="1164" y="801" width="2" height="28" fill="#d0d0d0"/><circle cx="1160" cy="792" r="3" fill="#9a9a9a"/>
<rect x="1197" y="794" width="4" height="39" fill="#6a6a6a"/><rect x="1201" y="796" width="3" height="37" fill="#808080"/><rect x="1204" y="794" width="4" height="39" fill="#808080"/><rect x="1208" y="798" width="3" height="35" fill="#808080"/><rect x="1211" y="796" width="3" height="37" fill="#c4c4c4"/><rect x="1214" y="795" width="2" height="38" fill="#b0b0b0"/><rect x="1216" y="797" width="3" height="36" fill="#e6e6e6"/><rect x="1219" y="798" width="2" height="35" fill="#b0b0b0"/><rect x="1221" y="795" width="3" height="38" fill="#808080"/><rect x="1224" y="793" width="2" height="40" fill="#d8d8d8"/><rect x="1226" y="795" width="3" height="38" fill="#6a6a6a"/><rect x="1229" y="798" width="2" height="35" fill="#3a3a3a"/><rect x="1231" y="798" width="2" height="35" fill="#3a3a3a"/><rect x="1233" y="797" width="2" height="36" fill="#c4c4c4"/><rect x="1235" y="793" width="3" height="40" fill="#3a3a3a"/><rect x="1238" y="798" width="2" height="35" fill="#c4c4c4"/>
<rect x="1243" y="800" width="9" height="33" fill="#1a1a1a"/>
<rect x="1043" y="873" width="37" height="3" fill="#e8e8e8"/><rect x="1045" y="876" width="35" height="4" fill="#505050"/><rect x="1045" y="880" width="35" height="3" fill="#9a9a9a"/><rect x="1045" y="883" width="34" height="2" fill="#e8e8e8"/><rect x="1043" y="885" width="37" height="3" fill="#f4f4f4"/><rect x="1043" y="888" width="36" height="3" fill="#9a9a9a"/>
<polygon points="1096.0,862.0 1098.9,869.0 1106.5,869.6 1100.7,874.5 1102.5,881.9 1096.0,878.0 1089.5,881.9 1091.3,874.5 1085.5,869.6 1093.1,869.0" fill="#8a7c60"/>
<rect x="1088" y="878" width="17" height="13" fill="#8a7c60"/>
<path d="M1130,855 Q1140,848 1145,858 L1140,870 Q1136,880 1143,884 L1145,891 L1127,891 L1131,884 Q1128,870 1130,855 Z" fill="#050505"/>
<path d="M1156,855 Q1166,848 1171,858 L1166,870 Q1162,880 1169,884 L1171,891 L1153,891 L1157,884 Q1154,870 1156,855 Z" fill="#050505"/>
<path d="M1222,846 L1226,841 L1230,848 L1236,846 Q1244,856 1240,868 L1232,874 L1224,872 Q1218,860 1222,846 Z" fill="#5a1a10"/><rect x="1229" y="873" width="2" height="15" fill="#5a2a18"/><rect x="1220" y="887" width="20" height="4" fill="#4a2012"/>
<rect x="1049" y="914" width="4" height="34" fill="#9a9a9a"/><rect x="1053" y="913" width="3" height="35" fill="#c4c4c4"/><rect x="1056" y="914" width="3" height="34" fill="#d8d8d8"/><rect x="1059" y="914" width="4" height="34" fill="#3a3a3a"/><rect x="1063" y="912" width="4" height="36" fill="#3a3a3a"/><rect x="1067" y="916" width="2" height="32" fill="#d8d8d8"/><rect x="1069" y="917" width="2" height="31" fill="#e6e6e6"/><rect x="1071" y="917" width="3" height="31" fill="#d8d8d8"/><rect x="1074" y="917" width="3" height="31" fill="#e6e6e6"/><rect x="1077" y="912" width="2" height="36" fill="#6a6a6a"/><rect x="1079" y="912" width="3" height="36" fill="#9a9a9a"/><rect x="1082" y="913" width="3" height="35" fill="#f0f0f0"/><rect x="1085" y="914" width="3" height="34" fill="#f0f0f0"/><rect x="1088" y="913" width="3" height="35" fill="#f0f0f0"/><rect x="1091" y="916" width="2" height="32" fill="#e6e6e6"/><rect x="1093" y="914" width="3" height="34" fill="#b0b0b0"/><rect x="1096" y="915" width="4" height="33" fill="#d8d8d8"/><rect x="1100" y="916" width="2" height="32" fill="#e6e6e6"/>
<rect x="1120" y="929" width="37" height="3" fill="#3a7a6a"/><rect x="1120" y="932" width="35" height="2" fill="#9a9a9a"/><rect x="1122" y="934" width="33" height="3" fill="#505050"/><rect x="1122" y="937" width="33" height="3" fill="#2a2a2a"/><rect x="1123" y="940" width="33" height="4" fill="#f4f4f4"/><rect x="1121" y="944" width="35" height="4" fill="#9a9a9a"/>
<rect x="1197" y="912" width="4" height="36" fill="#808080"/><rect x="1201" y="917" width="2" height="31" fill="#3a3a3a"/><rect x="1203" y="916" width="3" height="32" fill="#f0f0f0"/><rect x="1206" y="916" width="3" height="32" fill="#c4c4c4"/><rect x="1209" y="917" width="3" height="31" fill="#b0b0b0"/><rect x="1212" y="913" width="3" height="35" fill="#d8d8d8"/><rect x="1215" y="915" width="2" height="33" fill="#f0f0f0"/><rect x="1217" y="914" width="4" height="34" fill="#3a3a3a"/><rect x="1221" y="916" width="3" height="32" fill="#3a3a3a"/><rect x="1224" y="912" width="4" height="36" fill="#808080"/><rect x="1228" y="913" width="4" height="35" fill="#808080"/><rect x="1232" y="912" width="3" height="36" fill="#d8d8d8"/><rect x="1235" y="917" width="2" height="31" fill="#808080"/><rect x="1237" y="912" width="3" height="36" fill="#6a6a6a"/><rect x="1240" y="914" width="2" height="34" fill="#3a3a3a"/><rect x="1242" y="913" width="2" height="35" fill="#d8d8d8"/>
<rect x="1059" y="971" width="3" height="34" fill="#f0f0f0"/><rect x="1062" y="970" width="2" height="35" fill="#e6e6e6"/><rect x="1064" y="968" width="3" height="37" fill="#9a9a9a"/><rect x="1067" y="970" width="4" height="35" fill="#3a3a3a"/><rect x="1071" y="973" width="3" height="32" fill="#3a3a3a"/><rect x="1074" y="973" width="4" height="32" fill="#c4c4c4"/><rect x="1078" y="972" width="3" height="33" fill="#b0b0b0"/><rect x="1081" y="972" width="2" height="33" fill="#f0f0f0"/><rect x="1083" y="971" width="4" height="34" fill="#9a9a9a"/><rect x="1087" y="972" width="3" height="33" fill="#6a6a6a"/><rect x="1090" y="971" width="2" height="34" fill="#3a3a3a"/><rect x="1092" y="973" width="4" height="32" fill="#808080"/><rect x="1096" y="969" width="2" height="36" fill="#e6e6e6"/><rect x="1098" y="970" width="1" height="35" fill="#f0f0f0"/>
<path d="M1133,961 L1147,961 L1142,979 L1141.5,999 L1144,1002 L1136,1002 L1138.5,999 L1138,979 Z" fill="#8c7c5c"/><rect x="1135" y="1002" width="10" height="3" fill="#1a1a1a"/>
<path d="M1158,961 L1172,961 L1167,979 L1166.5,999 L1169,1002 L1161,1002 L1163.5,999 L1163,979 Z" fill="#8c7c5c"/><rect x="1160" y="1002" width="10" height="3" fill="#1a1a1a"/>
<path d="M1214,961 L1218,967 L1222,961 L1220,969 Q1226,983 1218,996 Q1210,983 1216,969 Z" fill="#8f8266"/><path d="M1212,1005 L1213,997 L1223,997 L1224,1005 Z" fill="#0e0a08"/>
<path d="M1236,961 L1240,967 L1244,961 L1242,969 Q1248,983 1240,996 Q1232,983 1238,969 Z" fill="#8f8266"/><path d="M1234,1005 L1235,997 L1245,997 L1246,1005 Z" fill="#0e0a08"/>
</g>
<line x1="1474" y1="413" x2="1478" y2="1035" stroke="#d0d0d0" stroke-width="1.6"/>
<g id="window">
<polygon points="1475,585 1488,585 1488,906 1477,906" fill="#ffffff"/>
<polygon points="1488,585 1595,538 1595,910 1488,906" fill="#060606"/>
<polygon points="1509,596 1595,561 1595,633 1509,657" fill="url(#glassUp)"/>
<polygon points="1515,680 1539,673 1539,893 1515,893" fill="url(#glassLo)"/>
<polygon points="1549,670 1558,668 1558,893 1549,893" fill="url(#glassLo)"/>
<polygon points="1569,665 1595,657 1595,893 1569,893" fill="url(#glassLo)"/>
<g clip-path="url(#glassclip)"><g filter="url(#blur1)" opacity="0.75">
<ellipse cx="1563" cy="805" rx="9" ry="11" fill="#9aa696"/>
<ellipse cx="1588" cy="570" rx="8" ry="6" fill="#c8d0c6"/>
<ellipse cx="1514" cy="612" rx="6" ry="6" fill="#8a9886"/>
<ellipse cx="1556" cy="749" rx="7" ry="8" fill="#5f6f58"/>
<ellipse cx="1525" cy="846" rx="4" ry="12" fill="#c8d0c6"/>
<ellipse cx="1522" cy="764" rx="4" ry="14" fill="#6f7f66"/>
<ellipse cx="1510" cy="815" rx="8" ry="7" fill="#6f7f66"/>
<ellipse cx="1592" cy="738" rx="7" ry="6" fill="#9aa696"/>
<ellipse cx="1592" cy="625" rx="5" ry="8" fill="#c8d0c6"/>
<ellipse cx="1524" cy="608" rx="5" ry="12" fill="#5f6f58"/>
<ellipse cx="1560" cy="757" rx="5" ry="7" fill="#9aa696"/>
<ellipse cx="1580" cy="719" rx="4" ry="9" fill="#8a9886"/>
<ellipse cx="1525" cy="645" rx="9" ry="8" fill="#5f6f58"/>
<ellipse cx="1544" cy="741" rx="5" ry="10" fill="#c8d0c6"/>
<ellipse cx="1511" cy="575" rx="7" ry="14" fill="#6f7f66"/>
<ellipse cx="1520" cy="641" rx="5" ry="8" fill="#c8d0c6"/>
<ellipse cx="1555" cy="816" rx="7" ry="12" fill="#5f6f58"/>
<ellipse cx="1541" cy="658" rx="9" ry="5" fill="#c8d0c6"/>
<ellipse cx="1539" cy="762" rx="5" ry="13" fill="#6f7f66"/>
<ellipse cx="1556" cy="663" rx="5" ry="12" fill="#8a9886"/>
<ellipse cx="1563" cy="798" rx="9" ry="6" fill="#8a9886"/>
<ellipse cx="1514" cy="886" rx="9" ry="4" fill="#4f5f4a"/>
<ellipse cx="1573" cy="673" rx="6" ry="8" fill="#8a9886"/>
<ellipse cx="1515" cy="862" rx="8" ry="7" fill="#5f6f58"/>
<ellipse cx="1528" cy="884" rx="9" ry="10" fill="#4f5f4a"/>
<ellipse cx="1577" cy="595" rx="5" ry="5" fill="#c8d0c6"/>
<ellipse cx="1546" cy="607" rx="8" ry="14" fill="#4f5f4a"/>
<ellipse cx="1549" cy="721" rx="5" ry="7" fill="#9aa696"/>
<ellipse cx="1550" cy="858" rx="5" ry="14" fill="#5f6f58"/>
<ellipse cx="1592" cy="767" rx="8" ry="6" fill="#c8d0c6"/>
<ellipse cx="1552" cy="730" rx="8" ry="8" fill="#4f5f4a"/>
<ellipse cx="1577" cy="816" rx="7" ry="4" fill="#9aa696"/>
<ellipse cx="1536" cy="745" rx="5" ry="9" fill="#9aa696"/>
<ellipse cx="1575" cy="788" rx="9" ry="7" fill="#8a9886"/>
<ellipse cx="1525" cy="841" rx="6" ry="7" fill="#c8d0c6"/>
<ellipse cx="1567" cy="713" rx="7" ry="12" fill="#4f5f4a"/>
<ellipse cx="1540" cy="773" rx="9" ry="8" fill="#9aa696"/>
<ellipse cx="1588" cy="617" rx="6" ry="8" fill="#9aa696"/>
<ellipse cx="1538" cy="607" rx="4" ry="8" fill="#6f7f66"/>
<ellipse cx="1583" cy="653" rx="7" ry="11" fill="#5f6f58"/>
<ellipse cx="1525" cy="818" rx="6" ry="13" fill="#4f5f4a"/>
<ellipse cx="1536" cy="743" rx="5" ry="14" fill="#9aa696"/>
<ellipse cx="1527" cy="754" rx="7" ry="6" fill="#4f5f4a"/>
<ellipse cx="1568" cy="768" rx="9" ry="14" fill="#5f6f58"/>
<ellipse cx="1524" cy="854" rx="5" ry="6" fill="#5f6f58"/>
<ellipse cx="1526" cy="572" rx="5" ry="11" fill="#c8d0c6"/>
<ellipse cx="1516" cy="627" rx="8" ry="4" fill="#9aa696"/>
<ellipse cx="1544" cy="652" rx="8" ry="11" fill="#c8d0c6"/>
<ellipse cx="1557" cy="878" rx="7" ry="5" fill="#4f5f4a"/>
<ellipse cx="1556" cy="672" rx="5" ry="8" fill="#4f5f4a"/>
<ellipse cx="1521" cy="695" rx="7" ry="8" fill="#4f5f4a"/>
<ellipse cx="1522" cy="757" rx="6" ry="6" fill="#4f5f4a"/>
<ellipse cx="1521" cy="590" rx="3" ry="5" fill="#9aa696"/>
<ellipse cx="1558" cy="763" rx="5" ry="13" fill="#6f7f66"/>
<ellipse cx="1558" cy="702" rx="6" ry="9" fill="#6f7f66"/>
<ellipse cx="1570" cy="687" rx="7" ry="7" fill="#6f7f66"/>
<ellipse cx="1593" cy="724" rx="3" ry="13" fill="#c8d0c6"/>
<ellipse cx="1536" cy="867" rx="6" ry="5" fill="#6f7f66"/>
<ellipse cx="1563" cy="706" rx="3" ry="5" fill="#8a9886"/>
<ellipse cx="1543" cy="718" rx="5" ry="13" fill="#4f5f4a"/>
</g></g>
<rect x="1505" y="660" width="2" height="235" fill="#f0f0f0" opacity="0.7"/>
<rect x="1539" y="1016" width="0" height="0"/>
<rect x="1541" y="775" width="4" height="7" fill="#8a5a2a"/><rect x="1560" y="775" width="4" height="7" fill="#8a5a2a"/>
</g>
<g id="ac">
<ellipse cx="1410" cy="1031" rx="30" ry="4.5" fill="#6b5446"/>
<rect x="1382" y="778" width="21" height="251" fill="#3a3a3a"/>
<rect x="1382" y="778" width="21" height="34" fill="#262626"/>
<rect x="1384" y="812" width="18" height="165" fill="#e8e8e8"/>
<rect x="1386" y="814" width="1" height="161" fill="#555"/>
<rect x="1389" y="814" width="1" height="161" fill="#555"/>
<rect x="1392" y="814" width="1" height="161" fill="#555"/>
<rect x="1395" y="814" width="1" height="161" fill="#555"/>
<rect x="1398" y="814" width="1" height="161" fill="#555"/>
<rect x="1401" y="814" width="1" height="161" fill="#555"/>
<rect x="1384" y="830" width="18" height="1" fill="#999"/>
<rect x="1384" y="850" width="18" height="1" fill="#999"/>
<rect x="1384" y="870" width="18" height="1" fill="#999"/>
<rect x="1384" y="890" width="18" height="1" fill="#999"/>
<rect x="1384" y="910" width="18" height="1" fill="#999"/>
<rect x="1384" y="930" width="18" height="1" fill="#999"/>
<rect x="1384" y="950" width="18" height="1" fill="#999"/>
<rect x="1384" y="970" width="18" height="1" fill="#999"/>
<rect x="1402" y="779" width="34" height="250" rx="3" fill="url(#acw)"/>
</g>
<g id="board">
<polygon points="82,666 213.6,701.6 213.6,830 82,819" fill="#0b3a64"/>
<polygon points="82,666 213.6,701.6 213.6,715.6 82,683.6" fill="#15506f"/>
<line x1="213.5" y1="701" x2="213.5" y2="830" stroke="#2a7ad0" stroke-width="1.5"/>
<text x="107" y="694" font-size="9" fill="#f0f0f0" transform="rotate(14 107 694)" font-weight="bold">红旗  荣耀展示</text>
<polygon points="82,696 106,700 112,745 82,741" fill="#3a3026"/>
<polygon points="84.4,699.4 104.1,702.9 109.0,741.6 84.4,738.1" fill="#807b50"/>
<polygon points="120,704 152,711 158,752 127,748" fill="#3a3026"/>
<polygon points="123.5,707.5 149.7,713.5 154.6,748.7 129.2,745.3" fill="#807b50"/>
<polygon points="163,714 192,721 197,760 170,756" fill="#3a3026"/>
<polygon points="166.2,717.3 189.9,723.3 194.0,756.9 171.9,753.4" fill="#807b50"/>
<polygon points="82,762 104,766 110,807 82,804" fill="#3a3026"/>
<polygon points="84.2,765.2 102.3,768.6 107.2,803.9 84.2,801.3" fill="#807b50"/>
<polygon points="118,767 151,773 155,814 124,811" fill="#3a3026"/>
<polygon points="121.4,770.4 148.5,775.6 151.8,810.8 126.3,808.2" fill="#807b50"/>
<polygon points="162,773 192,779 197,818 169,815" fill="#3a3026"/>
<polygon points="165.2,776.3 189.8,781.4 193.9,815.0 171.0,812.4" fill="#807b50"/>
<line x1="82" y1="742" x2="213" y2="762" stroke="#707070" stroke-width="2"/>
<line x1="82" y1="808" x2="213" y2="819" stroke="#707070" stroke-width="2"/>
<polygon points="88,818 107,819 114,870 95,870" fill="#0d0d0d"/>
<polygon points="91.6,820.6 105.3,821.5 110.4,867.4 96.7,867.4" fill="#8a8058"/>
<polygon points="112,820 128,822 135,871 118,871" fill="#0d0d0d"/>
<polygon points="115.2,822.6 126.7,824.4 131.7,868.5 119.5,868.5" fill="#8a8058"/>
<polygon points="158,824 175,826 180,871 163,871" fill="#0d0d0d"/>
<polygon points="161.1,826.4 173.3,828.2 176.9,868.7 164.7,868.7" fill="#8a8058"/>
<polygon points="175,826 190,828 196,871 182,871" fill="#0d0d0d"/>
<polygon points="178.0,828.3 188.8,830.1 193.1,868.8 183.1,868.8" fill="#8a8058"/>
<path d="M133,832 L141,832 L139,846 L138,861 L136,861 L135,846 Z" fill="#080808"/>
<path d="M141,832 L149,832 L147,846 L146,861 L144,861 L143,846 Z" fill="#080808"/>
<path d="M149,832 L157,832 L155,846 L154,861 L152,861 L151,846 Z" fill="#080808"/>
<rect x="135" y="861" width="20" height="10" fill="#2a2a2a"/>
<path d="M196,836 L203,836 L201,848 L200.5,861 L198.5,861 L198,848 Z" fill="#080808"/>
<path d="M203,836 L210,836 L208,848 L207.5,861 L205.5,861 L205,848 Z" fill="#080808"/>
<path d="M210,836 L217,836 L215,848 L214.5,861 L212.5,861 L212,848 Z" fill="#080808"/>
<rect x="197" y="861" width="19" height="10" fill="#2a2a2a"/>
<line x1="82" y1="872" x2="218" y2="872" stroke="#0b3a64" stroke-width="3"/>
<polygon points="219,801 243,803 243,879 219,879" fill="#1f78d1"/>
<path d="M222,878 Q230,860 232,845 Q234,828 240,806 M231,850 L242,838 M228,862 L238,866 M233,828 L225,818 M236,815 L243,812 M226,872 L242,876 M222,840 L230,838" stroke="#0b3a64" stroke-width="1.6" fill="none"/>
<rect x="227" y="705" width="4.5" height="27" fill="#1f78d1"/>
<text x="0" y="0" font-size="12" font-weight="bold" fill="#111" transform="translate(232 720)">学</text>
<text x="0" y="0" font-size="12" font-weight="bold" fill="#111" transform="translate(232 742)">校</text>
<text x="0" y="0" font-size="12" font-weight="bold" fill="#111" transform="translate(232 764)">荣</text>
<text x="0" y="0" font-size="12" font-weight="bold" fill="#111" transform="translate(232 786)">誉</text>
<rect x="224" y="735" width="2" height="60" fill="#222"/>
<text x="203" y="733.0" font-size="8" font-weight="bold" fill="#e8eef4">务</text>
<text x="203" y="745.5" font-size="8" font-weight="bold" fill="#e8eef4">实</text>
<text x="203" y="758.0" font-size="8" font-weight="bold" fill="#e8eef4">·</text>
<text x="203" y="770.5" font-size="8" font-weight="bold" fill="#e8eef4">创</text>
<text x="203" y="783.0" font-size="8" font-weight="bold" fill="#e8eef4">新</text>
<text x="203" y="795.5" font-size="8" font-weight="bold" fill="#e8eef4">·</text>
<text x="203" y="808.0" font-size="8" font-weight="bold" fill="#e8eef4">奋</text>
<text x="203" y="820.5" font-size="8" font-weight="bold" fill="#e8eef4">进</text>
<line x1="82" y1="889" x2="243" y2="885" stroke="#0b3a64" stroke-width="2"/>
</g>
<line x1="823.5" y1="396" x2="823.5" y2="490" stroke="#1414c8" stroke-width="1.5"/>
<line x1="823.5" y1="490" x2="823.5" y2="1086" stroke="#7a7ad8" stroke-width="1.2"/>
<line x1="82" y1="1086" x2="824" y2="1086" stroke="#b81a1a" stroke-width="1.6"/>
<line x1="824" y1="1086" x2="1595" y2="1086" stroke="#c02020" stroke-width="1.2" stroke-dasharray="2,3"/>
<line x1="824" y1="1086" x2="787" y2="1566" stroke="#1aa01a" stroke-width="1.3"/>
<line x1="823" y1="1299" x2="823" y2="1566" stroke="#c8c8d8" stroke-width="1" stroke-dasharray="3,3"/>
<text x="88" y="115" font-size="16" fill="#111">返回</text>
<g id="bigwm">
<circle cx="453.5" cy="1522.5" r="26" fill="#d2d2d2"/>
<path d="M436,1518 Q446,1510 456,1516 L470,1504 Q466,1520 458,1528 L452,1540 L448,1530 Q440,1528 436,1518 Z" fill="#ffffff"/>
<text x="487.5" y="1538" font-size="44" textLength="132" lengthAdjust="spacingAndGlyphs" fill="#ffffff" stroke="#c4c4c4" stroke-width="1">智鸥网</text>
<rect x="622.0" y="1519" width="17" height="3" fill="#ffffff" stroke="#c8c8c8" stroke-width="0.8"/>
<rect x="644.5" y="1519" width="17" height="3" fill="#ffffff" stroke="#c8c8c8" stroke-width="0.8"/>
<rect x="667.0" y="1519" width="17" height="3" fill="#ffffff" stroke="#c8c8c8" stroke-width="0.8"/>
<rect x="689.5" y="1519" width="17" height="3" fill="#ffffff" stroke="#c8c8c8" stroke-width="0.8"/>
<rect x="712.0" y="1519" width="17" height="3" fill="#ffffff" stroke="#c8c8c8" stroke-width="0.8"/>
<rect x="734.5" y="1519" width="17" height="3" fill="#ffffff" stroke="#c8c8c8" stroke-width="0.8"/>
<text x="757.5" y="1540" font-size="47" textLength="235" lengthAdjust="spacingAndGlyphs" fill="#ffffff" stroke="#c4c4c4" stroke-width="1">模型好又多</text>
<rect x="995.0" y="1519" width="16" height="3" fill="#ffffff" stroke="#c8c8c8" stroke-width="0.8"/>
<rect x="1016.0" y="1519" width="16" height="3" fill="#ffffff" stroke="#c8c8c8" stroke-width="0.8"/>
<rect x="1037.0" y="1519" width="16" height="3" fill="#ffffff" stroke="#c8c8c8" stroke-width="0.8"/>
<rect x="1058.0" y="1519" width="16" height="3" fill="#ffffff" stroke="#c8c8c8" stroke-width="0.8"/>
<rect x="1079.0" y="1519" width="16" height="3" fill="#ffffff" stroke="#c8c8c8" stroke-width="0.8"/>
<text x="1326" y="1514" font-size="92" textLength="227" lengthAdjust="spacingAndGlyphs" fill="#ffffff" stroke="#b4b4b4" stroke-width="1.1">智鸥网</text>
<text x="1358" y="1557" font-size="34" textLength="211" lengthAdjust="spacingAndGlyphs" fill="#ffffff" stroke="#1a1a1a" stroke-width="1.4">ID:542664057</text>
</g>
</g>
<rect x="80" y="99" width="2" height="1469" fill="#555"/>
<rect x="80" y="99" width="1516" height="1" fill="#686868"/>
<g id="chrome">
<rect x="0" y="0" width="1598" height="55" fill="#ffffff"/>
<rect x="0" y="0" width="1598" height="1" fill="#8a8a8a"/>
<rect x="0" y="0" width="1" height="1600" fill="#9a9a9a"/>
<rect x="1596" y="0" width="2" height="1600" fill="#9a9a9a"/>
<rect x="0" y="1598" width="1598" height="2" fill="#9a9a9a"/>
<path d="M12,12 L19,9 L26,12 L25,22 L18,25 L12,22 Z" fill="#e01818"/>
<path d="M15,15 L21,13 M15,18 L22,16 M16,21 L19,20" stroke="#ffffff" stroke-width="1.6"/>
<text x="33" y="22" font-size="14.2" fill="#111">6677778 - SketchUp Pro</text>
<rect x="1465" y="16" width="12" height="1.2" fill="#111"/>
<rect x="1514.5" y="11.5" width="11" height="11" fill="none" stroke="#111" stroke-width="1.1"/>
<path d="M1566,11 L1577,22 M1577,11 L1566,22" stroke="#111" stroke-width="1.1"/>
<text x="9" y="50" font-size="13" fill="#111">文件(F)</text>
<text x="66" y="50" font-size="13" fill="#111">编辑(E)</text>
<text x="125" y="50" font-size="13" fill="#111">视图(V)</text>
<text x="185" y="50" font-size="13" fill="#111">相机(C)</text>
<text x="245" y="50" font-size="13" fill="#111">绘图(R)</text>
<text x="305" y="50" font-size="13" fill="#111">工具(T)</text>
<text x="365" y="50" font-size="13" fill="#111">窗口(W)</text>
<text x="428" y="50" font-size="13" fill="#111">扩展程序</text>
<text x="496" y="50" font-size="13" fill="#111">帮助(H)</text>
<rect x="0" y="55" width="1598" height="44" fill="#f0f0f0"/>
<rect x="1" y="57" width="164" height="41" fill="#f0f0f0"/>
<rect x="164" y="57" width="1" height="41" fill="#cfcfcf"/>
<rect x="0" y="97" width="1598" height="2" fill="#dadada"/>
<rect x="6" y="61.0" width="1.5" height="1.5" fill="#9a9a9a"/>
<rect x="6" y="65.2" width="1.5" height="1.5" fill="#9a9a9a"/>
<rect x="6" y="69.4" width="1.5" height="1.5" fill="#9a9a9a"/>
<rect x="6" y="73.6" width="1.5" height="1.5" fill="#9a9a9a"/>
<rect x="6" y="77.8" width="1.5" height="1.5" fill="#9a9a9a"/>
<rect x="6" y="82.0" width="1.5" height="1.5" fill="#9a9a9a"/>
<rect x="6" y="86.2" width="1.5" height="1.5" fill="#9a9a9a"/>
<rect x="6" y="90.4" width="1.5" height="1.5" fill="#9a9a9a"/>
<rect x="6" y="94.6" width="1.5" height="1.5" fill="#9a9a9a"/>
<rect x="12.5" y="59.5" width="37" height="36" fill="#c9e0f5" stroke="#9ccaf2" stroke-width="1"/>
<g transform="translate(31 77)"><path d="M-6,-10 L-6,8 L-1.5,4 L2,11 L5,9.5 L1.5,2.5 L7,2.5 Z" fill="#000" stroke="#fff" stroke-width="1.2"/></g>
<g transform="translate(68 77)"><path d="M-11,-7 L3,-12 L12,-6 L10,9 L-3,13 L-10,6 Z" fill="#ececec" stroke="#b4b4b4" stroke-width="1.6"/><path d="M-11,-7 L-3,-1 L12,-6 M-3,-1 L-3,13" stroke="#b4b4b4" stroke-width="1.3" fill="none"/><path d="M-7,-5 L2,-8 L6,-5 L-3,-2 Z" fill="#fff" stroke="#c4c4c4" stroke-width="0.8"/><path d="M-8,1 L-5,3 M-8,5 L-5,7 M0,2 L6,0 M0,6 L6,4" stroke="#fff" stroke-width="2.2"/></g>
<g transform="translate(106 77)"><path d="M-7.5,-1.5 L4,-11 Q12,-5 13,5 Q11,11 5,12 Q-2,8 -7.5,-1.5 Z" fill="#e8dca6" stroke="#2a2a2a" stroke-width="1.8"/><path d="M1,8 Q6,2 11,-4" stroke="#2a2a2a" stroke-width="1.4" fill="none"/><ellipse cx="-2" cy="-6" rx="8.5" ry="3.8" fill="#a9c7c7" stroke="#2a2a2a" stroke-width="1.7" transform="rotate(-45 -2 -6)"/><path d="M4.6,-10 Q13,-9 9.5,0" stroke="#2a2a2a" stroke-width="1.6" fill="none"/><path d="M1,-3 Q-8,-2 -12.5,4 Q-13.5,11 -9,13.5 Q-7.5,7 -3,4 Q0,1.5 1,-3 Z" fill="#f7b800" stroke="#2a2a2a" stroke-width="1"/></g>
<g transform="translate(143 77)"><path d="M-10,-3 L5,-13 L14,-8 L2,3 Z" fill="#f4a6c0" stroke="#333" stroke-width="1.2"/><path d="M-10,-3 L2,3 L1,14 L-11,8 Z" fill="#f57c9c" stroke="#333" stroke-width="1.2"/><path d="M2,3 L14,-8 L13,2 L1,14 Z" fill="#b0506c" stroke="#333" stroke-width="1.2"/><path d="M-3,-2 L7,-9 M-1,0 L9,-7" stroke="#444" stroke-width="1.3"/></g>
<rect x="0" y="99" width="80" height="1469" fill="#f0f0f0"/>
<rect x="79" y="99" width="1" height="1469" fill="#d4d4d4"/>
<rect x="5.0" y="104" width="1.6" height="1.6" fill="#9a9a9a"/>
<rect x="9.1" y="104" width="1.6" height="1.6" fill="#9a9a9a"/>
<rect x="13.2" y="104" width="1.6" height="1.6" fill="#9a9a9a"/>
<rect x="17.3" y="104" width="1.6" height="1.6" fill="#9a9a9a"/>
<rect x="21.4" y="104" width="1.6" height="1.6" fill="#9a9a9a"/>
<rect x="25.5" y="104" width="1.6" height="1.6" fill="#9a9a9a"/>
<rect x="29.6" y="104" width="1.6" height="1.6" fill="#9a9a9a"/>
<rect x="33.7" y="104" width="1.6" height="1.6" fill="#9a9a9a"/>
<rect x="37.8" y="104" width="1.6" height="1.6" fill="#9a9a9a"/>
<rect x="41.9" y="104" width="1.6" height="1.6" fill="#9a9a9a"/>
<rect x="46.0" y="104" width="1.6" height="1.6" fill="#9a9a9a"/>
<rect x="50.1" y="104" width="1.6" height="1.6" fill="#9a9a9a"/>
<rect x="54.2" y="104" width="1.6" height="1.6" fill="#9a9a9a"/>
<rect x="58.3" y="104" width="1.6" height="1.6" fill="#9a9a9a"/>
<rect x="62.4" y="104" width="1.6" height="1.6" fill="#9a9a9a"/>
<rect x="66.5" y="104" width="1.6" height="1.6" fill="#9a9a9a"/>
<rect x="70.6" y="104" width="1.6" height="1.6" fill="#9a9a9a"/>
<rect x="74.7" y="104" width="1.6" height="1.6" fill="#9a9a9a"/>
<rect x="3.5" y="110.5" width="37" height="36" fill="#c9e0f5" stroke="#9ccaf2" stroke-width="1"/>
<rect x="6" y="188" width="71" height="1.2" fill="#9a9a9a"/>
<rect x="6" y="385" width="71" height="1.2" fill="#9a9a9a"/>
<rect x="6" y="508" width="71" height="1.2" fill="#9a9a9a"/>
<rect x="6" y="629" width="71" height="1.2" fill="#9a9a9a"/>
<rect x="6" y="752" width="71" height="1.2" fill="#9a9a9a"/>
<g transform="translate(22 128)"><path d="M-6,-10 L-6,8 L-1.5,4 L2,11 L5,9.5 L1.5,2.5 L7,2.5 Z" fill="#000" stroke="#fff" stroke-width="1.2"/></g>
<g transform="translate(59.5 128)"><path d="M-11,-7 L3,-12 L12,-6 L10,9 L-3,13 L-10,6 Z" fill="#ececec" stroke="#b4b4b4" stroke-width="1.6"/><path d="M-11,-7 L-3,-1 L12,-6 M-3,-1 L-3,13" stroke="#b4b4b4" stroke-width="1.3" fill="none"/><path d="M-7,-5 L2,-8 L6,-5 L-3,-2 Z" fill="#fff" stroke="#c4c4c4" stroke-width="0.8"/><path d="M-8,1 L-5,3 M-8,5 L-5,7 M0,2 L6,0 M0,6 L6,4" stroke="#fff" stroke-width="2.2"/></g>
<g transform="translate(22 166)"><path d="M-7.5,-1.5 L4,-11 Q12,-5 13,5 Q11,11 5,12 Q-2,8 -7.5,-1.5 Z" fill="#e8dca6" stroke="#2a2a2a" stroke-width="1.8"/><path d="M1,8 Q6,2 11,-4" stroke="#2a2a2a" stroke-width="1.4" fill="none"/><ellipse cx="-2" cy="-6" rx="8.5" ry="3.8" fill="#a9c7c7" stroke="#2a2a2a" stroke-width="1.7" transform="rotate(-45 -2 -6)"/><path d="M4.6,-10 Q13,-9 9.5,0" stroke="#2a2a2a" stroke-width="1.6" fill="none"/><path d="M1,-3 Q-8,-2 -12.5,4 Q-13.5,11 -9,13.5 Q-7.5,7 -3,4 Q0,1.5 1,-3 Z" fill="#f7b800" stroke="#2a2a2a" stroke-width="1"/></g>
<g transform="translate(59.5 166)"><path d="M-10,-3 L5,-13 L14,-8 L2,3 Z" fill="#f4a6c0" stroke="#333" stroke-width="1.2"/><path d="M-10,-3 L2,3 L1,14 L-11,8 Z" fill="#f57c9c" stroke="#333" stroke-width="1.2"/><path d="M2,3 L14,-8 L13,2 L1,14 Z" fill="#b0506c" stroke="#333" stroke-width="1.2"/><path d="M-3,-2 L7,-9 M-1,0 L9,-7" stroke="#444" stroke-width="1.3"/></g>
<g transform="translate(22 212)"><path d="M-12,12 L-9,4 L7,-11 L11,-7 L-4,9 Z" fill="#e81818" stroke="#222" stroke-width="1.2"/><path d="M-12,12 L-9,4 L-4,9 Z" fill="#e8dca0" stroke="#222" stroke-width="1"/><path d="M-12,12 L-10.5,8 L-8,10.5 Z" fill="#222"/></g>
<g transform="translate(59.5 212)"><path d="M-12.8,12.9 L-12.8,9 Q-12.5,2 -8.5,3.6 Q-4,4 0,9 Q3,13 7,11 Q11,8 6,3 Q2,0 -6,-2.5 Q-13,-5 -11,-8 Q-8,-10 -2,-8 L8,-3.5 Q13,-2 13.5,-6 Q13.5,-9 9,-12" stroke="#d81010" stroke-width="1.7" fill="none"/><circle cx="-12.8" cy="12.9" r="2.6" fill="#e81010"/><circle cx="9" cy="-12" r="2.6" fill="#e81010"/></g>
<g transform="translate(22 250)"><rect x="-10" y="-10" width="19" height="20" fill="#a8a590" stroke="#3a3a3a" stroke-width="1.2"/><path d="M-10,10 L9,-10" stroke="#e81010" stroke-width="1.5"/><circle cx="-10" cy="10" r="2" fill="#e81010"/><circle cx="9" cy="-10" r="2" fill="#e81010"/></g>
<g transform="translate(59.5 250)"><rect x="-9" y="-10" width="19" height="20" fill="#a8a590" stroke="#3a3a3a" stroke-width="1.2"/><path d="M-9,-10 L-9,10 L10,10 M-9,-6 Q8,-6 10,10" stroke="#e81010" stroke-width="1.5" fill="none"/><circle cx="-9" cy="-9" r="2" fill="#e81010"/><circle cx="-9" cy="10" r="2" fill="#e81010"/><circle cx="10" cy="10" r="2" fill="#e81010"/></g>
<g transform="translate(22 288)"><circle cx="0" cy="0" r="12" fill="#a8a590" stroke="#3a3a3a" stroke-width="1.2"/><path d="M0,0 L8,-8" stroke="#e81010" stroke-width="1.6"/><circle cx="0" cy="0" r="2.2" fill="#e81010"/><circle cx="8" cy="-8" r="2" fill="#e81010"/></g>
<g transform="translate(59.5 288)"><circle cx="0" cy="0" r="12" fill="none" stroke="#e81010" stroke-width="1.3"/><polygon points="-10,-2 -2,-11 10,-6 8,8 -5,9" fill="#a8a590" stroke="#3a3a3a" stroke-width="1.2"/><path d="M0,0 L9,-8" stroke="#e81010" stroke-width="1.6"/><circle cx="0" cy="0" r="2.2" fill="#e81010"/><circle cx="9" cy="-8" r="2" fill="#e81010"/></g>
<g transform="translate(22 325)"><path d="M-10,-10 L11,-10 L-10,12" stroke="#e81010" stroke-width="1.4" fill="none"/><path d="M11,-10 Q10,8 -10,12" stroke="#111" stroke-width="1.5" fill="none"/><circle cx="-10" cy="-10" r="2" fill="#e81010"/><circle cx="11" cy="-10" r="2" fill="#e81010"/><circle cx="-10" cy="12" r="2" fill="#e81010"/></g>
<g transform="translate(59.5 325)"><path d="M-6,-7 Q2,-14 11,-7 M-7,10 Q-16,-2 -6,-7" stroke="#111" stroke-width="1.5" fill="none"/><path d="M-6,-7 L-2,2 L-7,10 M-2,2 L11,-7" stroke="#e81010" stroke-width="1.4" fill="none"/><circle cx="-6" cy="-7" r="2" fill="#e81010"/><circle cx="11" cy="-7" r="2" fill="#e81010"/><circle cx="-7" cy="10" r="2" fill="#e81010"/></g>
<g transform="translate(22 363)"><path d="M-4,-10 Q14,-8 8,8 Q0,14 -12,5" stroke="#111" stroke-width="1.5" fill="none"/><path d="M-4,-10 L6,8 L-12,5" stroke="#e81010" stroke-width="1.4" fill="none"/><circle cx="-4" cy="-10" r="2" fill="#e81010"/><circle cx="6" cy="8" r="2" fill="#e81010"/><circle cx="-12" cy="5" r="2" fill="#e81010"/></g>
<g transform="translate(59.5 363)"><path d="M-10,-10 L11,-10 Q10,8 -10,12 Z" fill="#a8a590" stroke="#3a3a3a" stroke-width="1.2"/><path d="M-10,-10 L11,-10 M-10,12 L11,-10" stroke="#e81010" stroke-width="1.5"/><circle cx="-10" cy="-10" r="2" fill="#e81010"/><circle cx="11" cy="-10" r="2" fill="#e81010"/><circle cx="-10" cy="12" r="2" fill="#e81010"/></g>
<g transform="translate(22 410)"><path d="M0,-13 L5,-7 L2,-7 L2,-2 L7,-2 L7,-5 L13,0 L7,5 L7,2 L2,2 L2,7 L5,7 L0,13 L-5,7 L-2,7 L-2,2 L-7,2 L-7,5 L-13,0 L-7,-5 L-7,-2 L-2,-2 L-2,-7 L-5,-7 Z" fill="#e81010" stroke="#700" stroke-width="0.6"/><rect x="-3" y="-3" width="6" height="6" fill="#e8e8e8"/></g>
<g transform="translate(59.5 410)"><path d="M-13,3 L0,-5 L13,3 L0,11 Z" fill="#a8a590" stroke="#3a3a3a" stroke-width="1.2"/><path d="M-13,3 L-13,6 L0,14 L13,6 L13,3" fill="#8a8878" stroke="#3a3a3a" stroke-width="1"/><path d="M0,-13 L6,-6 L2.5,-6 L2.5,4 L-2.5,4 L-2.5,-6 L-6,-6 Z" fill="#e81010" stroke="#700" stroke-width="0.6"/></g>
<g transform="translate(22 448)"><path d="M-10,-2 A10,10 0 0 1 8,-7 L11,-10 L11,0 L2,0 L5,-4 A6,6 0 0 0 -5,-1 Z" fill="#e81010" stroke="#700" stroke-width="0.6"/><path d="M10,2 A10,10 0 0 1 -8,7 L-11,10 L-11,0 L-2,0 L-5,4 A6,6 0 0 0 5,1 Z" fill="#e81010" stroke="#700" stroke-width="0.6"/></g>
<g transform="translate(59.5 448)"><path d="M-11,2 Q-10,-10 4,-11 Q12,-10 12,-4 L6,-2 Q4,-6 -2,-5 Q-6,-2 -5,4 L-3,10 L-9,11 Z" fill="#a8a590" stroke="#3a3a3a" stroke-width="1.2"/><path d="M-5,4 Q-4,-4 4,-3 L3,-7 L9,-1 L4,4 L4,0 Q-1,0 -1,5 Z" fill="#e81010"/><path d="M-2,6 L2,9 L-3,11 Z" fill="#f07820"/></g>
<g transform="translate(22 486)"><rect x="-12" y="-11" width="22" height="22" fill="#fafafa" stroke="#e81010" stroke-width="1.3"/><rect x="-11.5" y="-6" width="16" height="16.5" fill="#a8a590" stroke="#222" stroke-width="1.3"/><path d="M-3,3 L4,-4 L1,-7 L11,-11 L7,-1 L4,-4 M-3,3 L0,6 L7,-1" fill="#e81010" stroke="#222" stroke-width="0.9"/><path d="M-3,3 L4,-4 L7,-1 L0,6 Z" fill="#e81010"/></g>
<g transform="translate(59.5 486)"><path d="M-9,-8 Q6,-15 12,-2 Q14,7 9,13" stroke="#e81010" stroke-width="1.3" fill="none"/><path d="M-8,2 Q-6,-5 1,-6 M3,11 Q8,6 6,1" stroke="#333" stroke-width="1.5" fill="none"/><path d="M-2,6 L5,-2 L2,-5 L12,-10 L8,0 L5,-2 M-2,6 L1,9 L8,0" fill="#e81010" stroke="#222" stroke-width="0.9"/><path d="M-2,6 L5,-2 L8,0 L1,9 Z" fill="#e81010"/></g>
<g transform="translate(22 531)"><path d="M-12,8 L-2,2 L-1,5 L-11,11 Z" fill="#e8c000" stroke="#222" stroke-width="1"/><rect x="-3" y="-11" width="15" height="15" rx="5" fill="#f0d000" stroke="#222" stroke-width="1.5" transform="rotate(-20)"/><circle cx="5" cy="-4" r="4" fill="#f8e040" stroke="#444" stroke-width="0.8"/></g>
<g transform="translate(59.5 531)"><path d="M-8,4 L2.5,-6 M-8,4 L0.3,11.5 M2.5,-6 L10.5,1.5 M-12,0.5 L-4.5,7.5 M-11,6.5 L-5,1.5 M-1.5,-11 L6,-3.5 M0.5,-3.5 L5.5,-9" stroke="#111" stroke-width="1.4" fill="none"/><circle cx="0.3" cy="11.5" r="1.8" fill="#e81010"/><circle cx="10.5" cy="1.5" r="1.8" fill="#e81010"/><text x="0" y="0" font-size="9" font-weight="bold" fill="#111" transform="translate(-9 -2) rotate(-45)">3</text></g>
<g transform="translate(22 569)"><path d="M-12,10 L12,-8 Q4,-12 -6,-8 Q-14,-2 -12,10 Z" fill="#f0d800" stroke="#333" stroke-width="1.3"/><path d="M-8,4 L4,-5 Q-2,-7 -6,-3 Z" fill="#f0f0f0" stroke="#333" stroke-width="0.8"/></g>
<g transform="translate(59.5 569)"><rect x="-5" y="-11" width="16" height="13" fill="#fff" stroke="#222" stroke-width="1.2"/><text x="-3" y="-1" font-size="9" font-family="Liberation Serif, serif" fill="#111">A1</text><path d="M-9,-3 L-9,11 M-12,7 L-9,12 L-6,7 M-9,-3 L-5,-3" stroke="#222" stroke-width="1.3" fill="none"/></g>
<g transform="translate(22 607)"><path d="M0,0 L0,-12" stroke="#1a4ac8" stroke-width="2"/><path d="M-3,-9 L0,-14 L3,-9 Z" fill="#1a4ac8"/><path d="M0,0 L0,12" stroke="#1a4ac8" stroke-width="1.5" stroke-dasharray="2,2"/><path d="M0,0 L11,-7" stroke="#18a018" stroke-width="2"/><path d="M8,-10 L13,-8 L10,-4 Z" fill="#18a018"/><path d="M0,0 L-11,7" stroke="#18a018" stroke-width="1.5" stroke-dasharray="2,2"/><path d="M0,0 L11,8" stroke="#e01818" stroke-width="2"/><path d="M8,11 L13,10 L10,5 Z" fill="#e01818"/><path d="M0,0 L-11,-7" stroke="#e01818" stroke-width="1.5" stroke-dasharray="2,2"/><circle cx="0" cy="0" r="2.5" fill="#000"/></g>
<g transform="translate(59.5 607)"><path d="M-8,10 L-1,-12 L4,-12 L12,8 L7,9 L5,3 L-2,3 L-4,10 Z" fill="#a8a590" stroke="#333" stroke-width="1.2"/><path d="M-1,-1 L4,-1 L1.5,-7 Z" fill="#f0f0f0"/></g>
<g transform="translate(22 654)"><path d="M-12,0 Q-12,-8 -2,-8 L-2,-11 L4,-6 L-2,-1 L-2,-4 Q-8,-4 -8,0 Q-8,4 0,6 L0,10 Q-12,9 -12,0 Z" fill="#e01818" stroke="#600" stroke-width="0.6"/><path d="M12,0 Q12,8 2,8 L2,11 L-4,6 L2,1 L2,4 Q8,4 8,0 Q8,-4 0,-6 L0,-10 Q12,-9 12,0 Z" fill="#5ec880" stroke="#064" stroke-width="0.6"/><path d="M0,-13 L0,13" stroke="#111" stroke-width="1.5"/></g>
<g transform="translate(59.5 654)"><path d="M-10,10 Q-12,2 -8,-2 L-2,-10 Q0,-12 1,-10 L-3,-3 L3,-11 Q5,-12 6,-10 L1,-2 L7,-9 Q9,-10 9,-8 L4,0 L10,-5 Q12,-5 11,-3 L4,6 Q0,12 -6,12 Z" fill="#fff" stroke="#222" stroke-width="1.1"/></g>
<g transform="translate(22 691)"><path d="M-2,3 L-11,11" stroke="#222" stroke-width="4" stroke-linecap="round"/><circle cx="4" cy="-4" r="8" fill="#a8cce8" stroke="#222" stroke-width="2"/></g>
<g transform="translate(59.5 691)"><rect x="-11" y="-11" width="22" height="22" fill="none" stroke="#e01818" stroke-width="1.6" stroke-dasharray="2,1.5"/><path d="M-2,3 L-11,11" stroke="#222" stroke-width="4" stroke-linecap="round"/><circle cx="4" cy="-4" r="7.5" fill="#a8cce8" stroke="#222" stroke-width="2"/></g>
<g transform="translate(22 730)"><path d="M-3,3 L-11,11" stroke="#222" stroke-width="3.5" stroke-linecap="round"/><circle cx="0" cy="0" r="6" fill="#a8cce8" stroke="#222" stroke-width="2"/><path d="M-12,-12 L-6,-10 L-10,-6 Z M12,-12 L10,-6 L6,-10 Z M12,12 L6,10 L10,6 Z" fill="#e01818"/><path d="M-11,-11 L-6,-6 M11,-11 L6,-6 M11,11 L6,6" stroke="#e01818" stroke-width="2"/></g>
<g transform="translate(59.5 730)"><circle cx="-3" cy="-3" r="8" fill="#d8d8d8" stroke="#aaa" stroke-width="1.5"/><path d="M-4,-6 Q6,-10 8,0 L11,-1 L8,6 L3,1 L6,1 Q4,-4 -2,-2 Z" fill="#bdbdbd" stroke="#999" stroke-width="0.8"/><path d="M2,4 L10,12" stroke="#aaa" stroke-width="3"/></g>
<g transform="translate(22 777)"><path d="M0,-12 Q3,-12 2,-8 Q5,-4 4,6 L2,10 L-2,10 L-4,6 Q-5,-4 -2,-8 Q-3,-12 0,-12 Z" fill="#fff" stroke="#222" stroke-width="1.1"/><path d="M-6,12 L0,8 L6,12" stroke="#e01818" stroke-width="1.5" fill="none"/></g>
<g transform="translate(59.5 777)"><path d="M-13,0 Q0,-12 13,0 Q0,10 -13,0 Z" fill="#fff" stroke="#222" stroke-width="1.4"/><circle cx="0" cy="0" r="5" fill="#555" stroke="#111"/><circle cx="0" cy="0" r="2" fill="#000"/><path d="M-12,-4 Q0,-14 12,-4" stroke="#222" stroke-width="1.2" fill="none"/></g>
<g transform="translate(22 813)"><ellipse cx="-7" cy="-1.5" rx="4.8" ry="7" fill="#1a1a1a"/><ellipse cx="-6.8" cy="10" rx="3.3" ry="3.6" fill="#1a1a1a"/><rect x="-10" y="5" width="6" height="2" fill="#888"/><ellipse cx="6.2" cy="-4" rx="4.8" ry="7" fill="#1a1a1a" transform="rotate(18 6.2 -4)"/><ellipse cx="3" cy="7.5" rx="3.3" ry="3.6" fill="#1a1a1a"/><rect x="1" y="3" width="6" height="2" fill="#888" transform="rotate(18 4 4)"/></g>
<g transform="translate(59.5 813)"><path d="M-0.5,-13.5 L14,1 L-0.5,15.5 Z" fill="#111"/><circle cx="-0.5" cy="1" r="9.3" fill="#fff" stroke="#111" stroke-width="1.3"/><path d="M-9.5,1 L9,1" stroke="#666" stroke-width="2"/><text x="-3" y="-2" font-size="7" font-weight="bold" fill="#111">C</text></g>
<rect x="0" y="1567" width="1598" height="1" fill="#e6e6e6"/>
<circle cx="15.5" cy="1583" r="10" fill="#ffffff" stroke="#8c8c8c" stroke-width="1.8"/>
<circle cx="48.5" cy="1583" r="10" fill="#ffffff" stroke="#8c8c8c" stroke-width="1.8"/>
<circle cx="81.5" cy="1583" r="10" fill="#ffffff" stroke="#8c8c8c" stroke-width="1.8"/>
<circle cx="15.5" cy="1579.5" r="3.2" fill="#8a8a8a"/><path d="M12.6,1580.5 L18.4,1580.5 L15.5,1588 Z" fill="#8a8a8a"/>
<circle cx="48.5" cy="1577.5" r="1.5" fill="#7a7a7a"/><path d="M46.5,1580 L50.5,1580 L50,1587.5 L47,1587.5 Z" fill="#7a7a7a"/>
<circle cx="81.5" cy="1579.5" r="3.3" fill="#8a8a8a"/><path d="M75.5,1591 Q75.5,1584 81.5,1584 Q87.5,1584 87.5,1591 Z" fill="#8a8a8a"/>
<rect x="103" y="1578" width="1" height="11" fill="#777"/>
<circle cx="120" cy="1583" r="9.6" fill="#1c5aa6" stroke="#0a1a3a" stroke-width="1.6"/>
<text x="115.5" y="1588.5" font-size="13" font-weight="bold" fill="#fff">?</text>
<text x="148" y="1590" font-size="17.3" fill="#111">选择对象。切换到扩充选择。拖动鼠标选择多项。</text>
<rect x="1292" y="1578" width="1" height="10" fill="#777"/>
<text x="1304" y="1590" font-size="17.3" fill="#111">数值</text>
<rect x="1350.5" y="1571.5" width="220" height="25" fill="#f0f0f0" stroke="#a8c2de" stroke-width="1"/>
<rect x="1591" y="1587" width="2" height="2" fill="#b0b0b0"/>
<rect x="1587" y="1591" width="2" height="2" fill="#b0b0b0"/>
<rect x="1591" y="1591" width="2" height="2" fill="#b0b0b0"/>
<rect x="1583" y="1595" width="2" height="2" fill="#b0b0b0"/>
<rect x="1587" y="1595" width="2" height="2" fill="#b0b0b0"/>
<rect x="1591" y="1595" width="2" height="2" fill="#b0b0b0"/>
</g>
<g id="wm" fill="#9b9b9b" fill-opacity="0.2" stroke="#000000" stroke-opacity="0.08" stroke-width="1">
<text x="89.5" y="129" font-size="37" textLength="110" lengthAdjust="spacingAndGlyphs">智鸥网</text><rect x="204.0" y="115" width="12.8" height="2.4"/><rect x="221.8" y="115" width="12.8" height="2.4"/><rect x="239.7" y="115" width="12.8" height="2.4"/><rect x="257.5" y="115" width="12.8" height="2.4"/><rect x="275.3" y="115" width="12.8" height="2.4"/><rect x="293.2" y="115" width="12.8" height="2.4"/><text x="317" y="123" font-size="20" font-weight="bold" textLength="100" lengthAdjust="spacingAndGlyphs">1miba.com</text>
<text x="889" y="106" font-size="20" font-weight="bold" textLength="100" lengthAdjust="spacingAndGlyphs">1miba.com</text><rect x="995.0" y="98" width="13.2" height="2.4"/><rect x="1013.2" y="98" width="13.2" height="2.4"/><rect x="1031.3" y="98" width="13.2" height="2.4"/><rect x="1049.5" y="98" width="13.2" height="2.4"/><rect x="1067.7" y="98" width="13.2" height="2.4"/><rect x="1085.8" y="98" width="13.2" height="2.4"/><text x="1112" y="112" font-size="37" textLength="110" lengthAdjust="spacingAndGlyphs">智鸥网</text><rect x="1227.0" y="98" width="12.8" height="2.4"/><rect x="1244.8" y="98" width="12.8" height="2.4"/><rect x="1262.7" y="98" width="12.8" height="2.4"/><rect x="1280.5" y="98" width="12.8" height="2.4"/><rect x="1298.3" y="98" width="12.8" height="2.4"/><rect x="1316.2" y="98" width="12.8" height="2.4"/><text x="1339" y="106" font-size="20" font-weight="bold" textLength="100" lengthAdjust="spacingAndGlyphs">1miba.com</text>
<text x="202" y="250" font-size="20" font-weight="bold" textLength="100" lengthAdjust="spacingAndGlyphs">1miba.com</text><rect x="314.0" y="242" width="12.7" height="2.4"/><rect x="331.7" y="242" width="12.7" height="2.4"/><rect x="349.3" y="242" width="12.7" height="2.4"/><rect x="367.0" y="242" width="12.7" height="2.4"/><rect x="384.7" y="242" width="12.7" height="2.4"/><rect x="402.3" y="242" width="12.7" height="2.4"/><text x="428.5" y="256" font-size="37" textLength="110" lengthAdjust="spacingAndGlyphs">智鸥网</text><rect x="543.0" y="242" width="12.7" height="2.4"/><rect x="560.7" y="242" width="12.7" height="2.4"/><rect x="578.3" y="242" width="12.7" height="2.4"/><rect x="596.0" y="242" width="12.7" height="2.4"/><rect x="613.7" y="242" width="12.7" height="2.4"/><rect x="631.3" y="242" width="12.7" height="2.4"/>
<text x="1227" y="234" font-size="20" font-weight="bold" textLength="100" lengthAdjust="spacingAndGlyphs">1miba.com</text><rect x="1334.0" y="226" width="13.0" height="2.4"/><rect x="1352.0" y="226" width="13.0" height="2.4"/><rect x="1370.0" y="226" width="13.0" height="2.4"/><rect x="1388.0" y="226" width="13.0" height="2.4"/><rect x="1406.0" y="226" width="13.0" height="2.4"/><rect x="1424.0" y="226" width="13.0" height="2.4"/><text x="1449" y="240" font-size="37" textLength="110" lengthAdjust="spacingAndGlyphs">智鸥网</text><rect x="1564.0" y="226" width="11.3" height="2.4"/><rect x="1580.3" y="226" width="11.3" height="2.4"/><rect x="1596.7" y="226" width="11.3" height="2.4"/><rect x="1613.0" y="226" width="11.3" height="2.4"/><rect x="1629.3" y="226" width="11.3" height="2.4"/><rect x="1645.7" y="226" width="11.3" height="2.4"/>
<rect x="2.0" y="424" width="12.8" height="2.4"/><rect x="19.8" y="424" width="12.8" height="2.4"/><rect x="37.7" y="424" width="12.8" height="2.4"/><rect x="55.5" y="424" width="12.8" height="2.4"/><rect x="73.3" y="424" width="12.8" height="2.4"/><rect x="91.2" y="424" width="12.8" height="2.4"/><text x="117" y="438" font-size="37" textLength="110" lengthAdjust="spacingAndGlyphs">智鸥网</text><rect x="229.0" y="424" width="13.0" height="2.4"/><rect x="247.0" y="424" width="13.0" height="2.4"/><rect x="265.0" y="424" width="13.0" height="2.4"/><rect x="283.0" y="424" width="13.0" height="2.4"/><rect x="301.0" y="424" width="13.0" height="2.4"/><rect x="319.0" y="424" width="13.0" height="2.4"/><text x="346" y="432" font-size="20" font-weight="bold" textLength="100" lengthAdjust="spacingAndGlyphs">1miba.com</text>
<text x="317" y="533" font-size="20" font-weight="bold" textLength="100" lengthAdjust="spacingAndGlyphs">1miba.com</text><rect x="423.0" y="525" width="12.7" height="2.4"/><rect x="440.7" y="525" width="12.7" height="2.4"/><rect x="458.3" y="525" width="12.7" height="2.4"/><rect x="476.0" y="525" width="12.7" height="2.4"/><rect x="493.7" y="525" width="12.7" height="2.4"/><rect x="511.3" y="525" width="12.7" height="2.4"/><text x="534.5" y="539" font-size="37" textLength="110" lengthAdjust="spacingAndGlyphs">智鸥网</text><rect x="652.0" y="525" width="12.8" height="2.4"/><rect x="669.8" y="525" width="12.8" height="2.4"/><rect x="687.7" y="525" width="12.8" height="2.4"/><rect x="705.5" y="525" width="12.8" height="2.4"/><rect x="723.3" y="525" width="12.8" height="2.4"/><rect x="741.2" y="525" width="12.8" height="2.4"/>
<text x="38" y="677" font-size="20" font-weight="bold" textLength="100" lengthAdjust="spacingAndGlyphs">1miba.com</text><rect x="143.0" y="669" width="13.2" height="2.4"/><rect x="161.2" y="669" width="13.2" height="2.4"/><rect x="179.3" y="669" width="13.2" height="2.4"/><rect x="197.5" y="669" width="13.2" height="2.4"/><rect x="215.7" y="669" width="13.2" height="2.4"/><rect x="233.8" y="669" width="13.2" height="2.4"/><text x="259.5" y="683" font-size="37" textLength="110" lengthAdjust="spacingAndGlyphs">智鸥网</text><rect x="375.0" y="669" width="12.8" height="2.4"/><rect x="392.8" y="669" width="12.8" height="2.4"/><rect x="410.7" y="669" width="12.8" height="2.4"/><rect x="428.5" y="669" width="12.8" height="2.4"/><rect x="446.3" y="669" width="12.8" height="2.4"/><rect x="464.2" y="669" width="12.8" height="2.4"/><text x="484.5" y="677" font-size="20" font-weight="bold" textLength="100" lengthAdjust="spacingAndGlyphs">1miba.com</text>
<text x="897.7" y="473" font-size="20" font-weight="bold" textLength="100" lengthAdjust="spacingAndGlyphs">1miba.com</text><rect x="1003.0" y="465" width="12.8" height="2.4"/><rect x="1020.8" y="465" width="12.8" height="2.4"/><rect x="1038.7" y="465" width="12.8" height="2.4"/><rect x="1056.5" y="465" width="12.8" height="2.4"/><rect x="1074.3" y="465" width="12.8" height="2.4"/><rect x="1092.2" y="465" width="12.8" height="2.4"/><text x="1117" y="479" font-size="37" textLength="110" lengthAdjust="spacingAndGlyphs">智鸥网</text><rect x="1231.0" y="465" width="12.8" height="2.4"/><rect x="1248.8" y="465" width="12.8" height="2.4"/><rect x="1266.7" y="465" width="12.8" height="2.4"/><rect x="1284.5" y="465" width="12.8" height="2.4"/><rect x="1302.3" y="465" width="12.8" height="2.4"/><rect x="1320.2" y="465" width="12.8" height="2.4"/><text x="1339" y="473" font-size="20" font-weight="bold" textLength="100" lengthAdjust="spacingAndGlyphs">1miba.com</text>
<text x="1110.5" y="638" font-size="20" font-weight="bold" textLength="100" lengthAdjust="spacingAndGlyphs">1miba.com</text><rect x="1218.0" y="630" width="12.8" height="2.4"/><rect x="1235.8" y="630" width="12.8" height="2.4"/><rect x="1253.7" y="630" width="12.8" height="2.4"/><rect x="1271.5" y="630" width="12.8" height="2.4"/><rect x="1289.3" y="630" width="12.8" height="2.4"/><rect x="1307.2" y="630" width="12.8" height="2.4"/><text x="1332" y="644" font-size="37" textLength="110" lengthAdjust="spacingAndGlyphs">智鸥网</text><rect x="1448.0" y="630" width="10.7" height="2.4"/><rect x="1463.7" y="630" width="10.7" height="2.4"/><rect x="1479.3" y="630" width="10.7" height="2.4"/><rect x="1495.0" y="630" width="10.7" height="2.4"/><rect x="1510.7" y="630" width="10.7" height="2.4"/><rect x="1526.3" y="630" width="10.7" height="2.4"/>
<rect x="-28.0" y="811" width="13.3" height="2.4"/><rect x="-9.7" y="811" width="13.3" height="2.4"/><rect x="8.7" y="811" width="13.3" height="2.4"/><rect x="27.0" y="811" width="13.3" height="2.4"/><rect x="45.3" y="811" width="13.3" height="2.4"/><rect x="63.7" y="811" width="13.3" height="2.4"/><text x="85" y="825" font-size="37" textLength="110" lengthAdjust="spacingAndGlyphs">智鸥网</text><rect x="202.0" y="811" width="10.0" height="2.4"/><rect x="217.0" y="811" width="10.0" height="2.4"/><rect x="232.0" y="811" width="10.0" height="2.4"/><rect x="247.0" y="811" width="10.0" height="2.4"/><rect x="262.0" y="811" width="10.0" height="2.4"/><rect x="277.0" y="811" width="10.0" height="2.4"/><text x="297" y="819" font-size="20" font-weight="bold" textLength="100" lengthAdjust="spacingAndGlyphs">1miba.com</text>
<text x="144.5" y="938" font-size="20" font-weight="bold" textLength="100" lengthAdjust="spacingAndGlyphs">1miba.com</text><rect x="252.0" y="930" width="12.8" height="2.4"/><rect x="269.8" y="930" width="12.8" height="2.4"/><rect x="287.7" y="930" width="12.8" height="2.4"/><rect x="305.5" y="930" width="12.8" height="2.4"/><rect x="323.3" y="930" width="12.8" height="2.4"/><rect x="341.2" y="930" width="12.8" height="2.4"/><text x="369.5" y="944" font-size="37" textLength="110" lengthAdjust="spacingAndGlyphs">智鸥网</text><rect x="483.0" y="930" width="11.8" height="2.4"/><rect x="499.8" y="930" width="11.8" height="2.4"/><rect x="516.7" y="930" width="11.8" height="2.4"/><rect x="533.5" y="930" width="11.8" height="2.4"/><rect x="550.3" y="930" width="11.8" height="2.4"/><rect x="567.2" y="930" width="11.8" height="2.4"/>
<text x="1240" y="900" font-size="20" font-weight="bold" textLength="100" lengthAdjust="spacingAndGlyphs">1miba.com</text><rect x="1347.0" y="892" width="12.5" height="2.4"/><rect x="1364.5" y="892" width="12.5" height="2.4"/><rect x="1382.0" y="892" width="12.5" height="2.4"/><rect x="1399.5" y="892" width="12.5" height="2.4"/><rect x="1417.0" y="892" width="12.5" height="2.4"/><rect x="1434.5" y="892" width="12.5" height="2.4"/><text x="1462" y="906" font-size="37" textLength="110" lengthAdjust="spacingAndGlyphs">智鸥网</text>
<text x="1000.7" y="1056" font-size="20" font-weight="bold" textLength="100" lengthAdjust="spacingAndGlyphs">1miba.com</text><rect x="1107.0" y="1048" width="12.8" height="2.4"/><rect x="1124.8" y="1048" width="12.8" height="2.4"/><rect x="1142.7" y="1048" width="12.8" height="2.4"/><rect x="1160.5" y="1048" width="12.8" height="2.4"/><rect x="1178.3" y="1048" width="12.8" height="2.4"/><rect x="1196.2" y="1048" width="12.8" height="2.4"/><text x="1220" y="1062" font-size="37" textLength="110" lengthAdjust="spacingAndGlyphs">智鸥网</text><rect x="1336.0" y="1048" width="12.8" height="2.4"/><rect x="1353.8" y="1048" width="12.8" height="2.4"/><rect x="1371.7" y="1048" width="12.8" height="2.4"/><rect x="1389.5" y="1048" width="12.8" height="2.4"/><rect x="1407.3" y="1048" width="12.8" height="2.4"/><rect x="1425.2" y="1048" width="12.8" height="2.4"/><text x="1446.5" y="1056" font-size="20" font-weight="bold" textLength="100" lengthAdjust="spacingAndGlyphs">1miba.com</text>
<rect x="12.0" y="1110" width="13.3" height="2.4"/><rect x="30.3" y="1110" width="13.3" height="2.4"/><rect x="48.7" y="1110" width="13.3" height="2.4"/><rect x="67.0" y="1110" width="13.3" height="2.4"/><rect x="85.3" y="1110" width="13.3" height="2.4"/><rect x="103.7" y="1110" width="13.3" height="2.4"/><text x="127" y="1124" font-size="37" textLength="110" lengthAdjust="spacingAndGlyphs">智鸥网</text><rect x="240.0" y="1110" width="12.8" height="2.4"/><rect x="257.8" y="1110" width="12.8" height="2.4"/><rect x="275.7" y="1110" width="12.8" height="2.4"/><rect x="293.5" y="1110" width="12.8" height="2.4"/><rect x="311.3" y="1110" width="12.8" height="2.4"/><rect x="329.2" y="1110" width="12.8" height="2.4"/><text x="346" y="1118" font-size="20" font-weight="bold" textLength="100" lengthAdjust="spacingAndGlyphs">1miba.com</text>
<text x="1155" y="1210" font-size="20" font-weight="bold" textLength="100" lengthAdjust="spacingAndGlyphs">1miba.com</text><rect x="1262.0" y="1202" width="12.8" height="2.4"/><rect x="1279.8" y="1202" width="12.8" height="2.4"/><rect x="1297.7" y="1202" width="12.8" height="2.4"/><rect x="1315.5" y="1202" width="12.8" height="2.4"/><rect x="1333.3" y="1202" width="12.8" height="2.4"/><rect x="1351.2" y="1202" width="12.8" height="2.4"/><text x="1379" y="1216" font-size="37" textLength="110" lengthAdjust="spacingAndGlyphs">智鸥网</text><rect x="1493.0" y="1202" width="13.2" height="2.4"/><rect x="1511.2" y="1202" width="13.2" height="2.4"/><rect x="1529.3" y="1202" width="13.2" height="2.4"/><rect x="1547.5" y="1202" width="13.2" height="2.4"/><rect x="1565.7" y="1202" width="13.2" height="2.4"/><rect x="1583.8" y="1202" width="13.2" height="2.4"/>
<rect x="84.0" y="1304" width="13.0" height="2.4"/><rect x="102.0" y="1304" width="13.0" height="2.4"/><rect x="120.0" y="1304" width="13.0" height="2.4"/><rect x="138.0" y="1304" width="13.0" height="2.4"/><rect x="156.0" y="1304" width="13.0" height="2.4"/><rect x="174.0" y="1304" width="13.0" height="2.4"/><text x="202" y="1318" font-size="37" textLength="110" lengthAdjust="spacingAndGlyphs">智鸥网</text><rect x="315.0" y="1304" width="12.8" height="2.4"/><rect x="332.8" y="1304" width="12.8" height="2.4"/><rect x="350.7" y="1304" width="12.8" height="2.4"/><rect x="368.5" y="1304" width="12.8" height="2.4"/><rect x="386.3" y="1304" width="12.8" height="2.4"/><rect x="404.2" y="1304" width="12.8" height="2.4"/><text x="427" y="1312" font-size="20" font-weight="bold" textLength="100" lengthAdjust="spacingAndGlyphs">1miba.com</text>
<text x="976" y="770" font-size="37" textLength="112" lengthAdjust="spacingAndGlyphs">智鸥网</text>
<rect x="1092.0" y="756" width="13.3" height="2.4"/><rect x="1110.3" y="756" width="13.3" height="2.4"/><rect x="1128.7" y="756" width="13.3" height="2.4"/><rect x="1147.0" y="756" width="13.3" height="2.4"/><rect x="1165.3" y="756" width="13.3" height="2.4"/><rect x="1183.7" y="756" width="13.3" height="2.4"/>
<text x="1204" y="771" font-size="41" textLength="206" lengthAdjust="spacingAndGlyphs">模型好又多</text>
<rect x="1416.0" y="756" width="12.7" height="2.4"/><rect x="1433.7" y="756" width="12.7" height="2.4"/><rect x="1451.3" y="756" width="12.7" height="2.4"/><rect x="1469.0" y="756" width="12.7" height="2.4"/><rect x="1486.7" y="756" width="12.7" height="2.4"/><rect x="1504.3" y="756" width="12.7" height="2.4"/>
</g>
</svg>
</body></html>
